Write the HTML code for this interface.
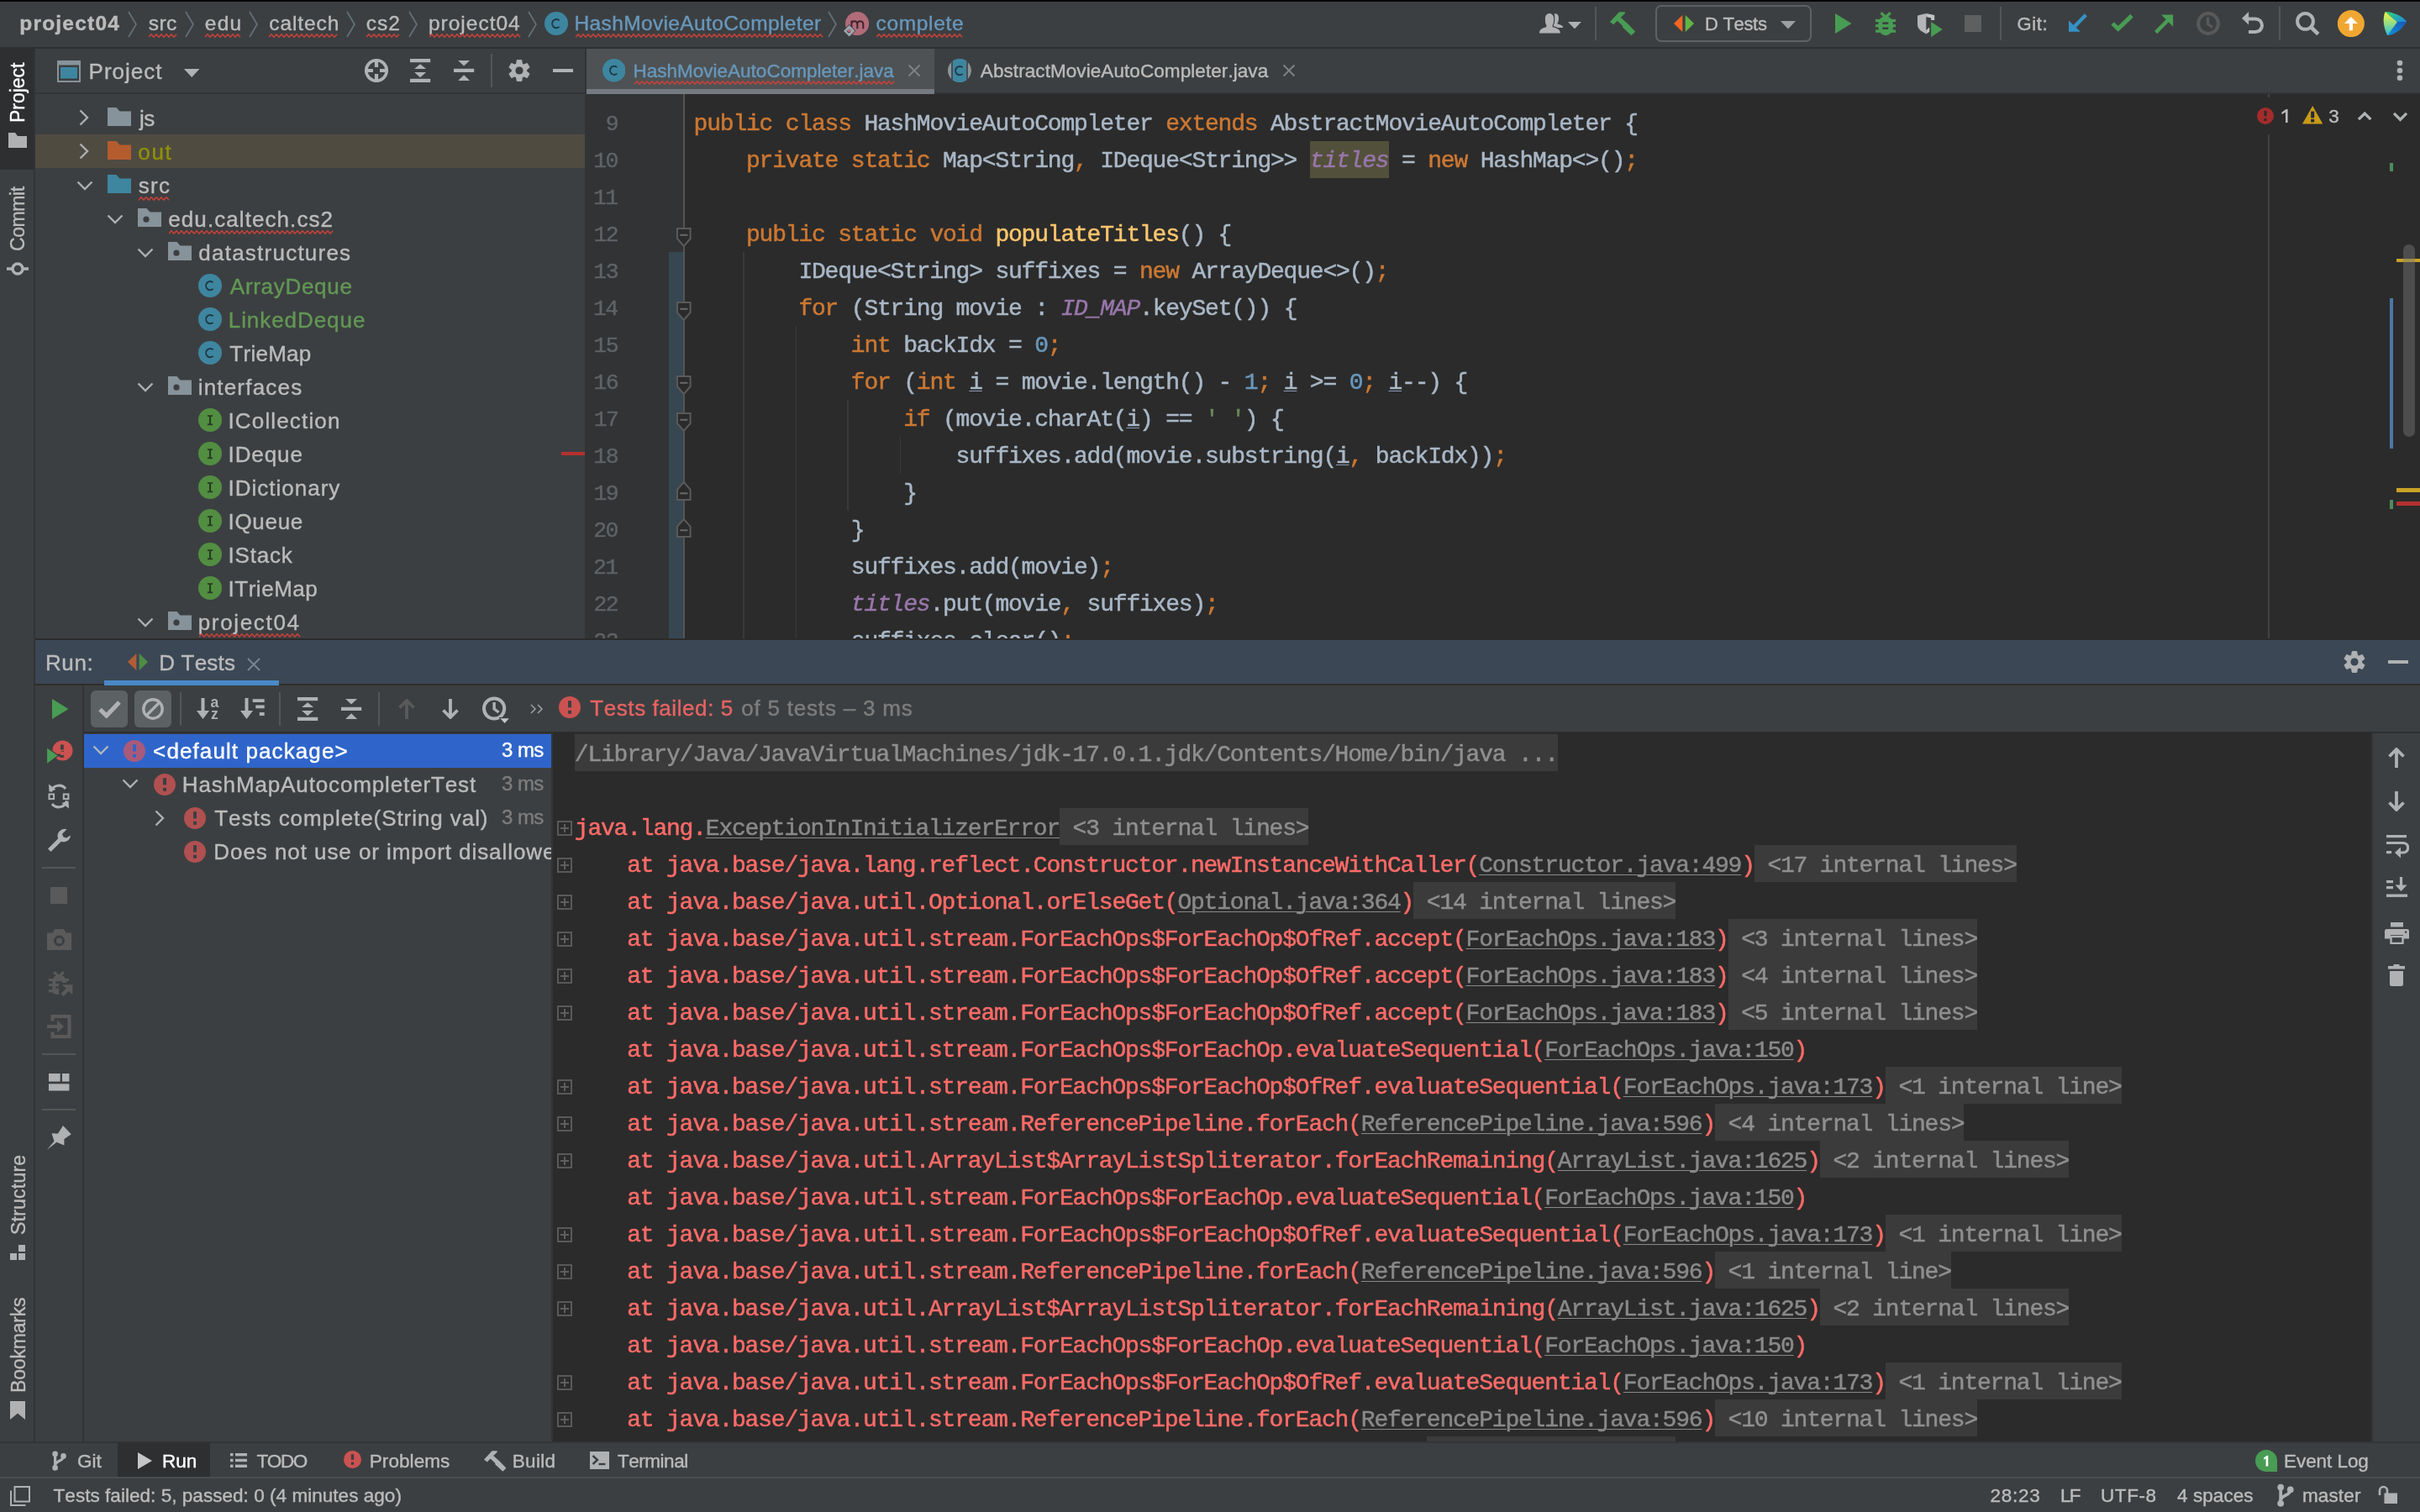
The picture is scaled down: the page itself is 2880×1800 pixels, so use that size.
<!DOCTYPE html>
<html><head><meta charset="utf-8"><title>project04 - HashMovieAutoCompleter.java</title>
<style>
html,body{margin:0;padding:0;background:#3c3f41;}
#app{will-change:transform;position:relative;width:2880px;height:1800px;overflow:hidden;background:#3c3f41;font-family:"Liberation Sans",sans-serif;font-kerning:none;}
.r{position:absolute;display:block;}
.t{position:absolute;white-space:pre;line-height:1;-webkit-text-stroke:0.4px currentColor;}
.c{position:absolute;overflow:hidden;}
.code{position:absolute;white-space:pre;font-family:"Liberation Mono",monospace;line-height:44px;height:44px;-webkit-text-stroke:0.5px currentColor;}
</style></head>
<body>
<div id="app">
<div class="r" style="left:0px;top:0px;width:2880px;height:1.5px;background:#050505;"></div>
<div class="r" style="left:0px;top:56px;width:2880px;height:2px;background:#2d2f30;"></div>
<span class="t " style="left:23.29px;top:15.60px;font-size:24.5px;color:#bbbbbb;letter-spacing:1.202px;font-weight:700;">project04</span>
<span class="t " style="left:176.82px;top:15.60px;font-size:24.5px;color:#bbbbbb;letter-spacing:0.435px;">src</span>
<svg class="r" style="left:176.6px;top:39.7px" width="37" height="5" viewBox="0 0 37 5"><polyline points="0.0,4.2 3.0,0.7 6.0,4.2 9.0,0.7 12.0,4.2 15.0,0.7 18.0,4.2 21.0,0.7 24.0,4.2 27.0,0.7 30.0,4.2 33.0,0.7" fill="none" stroke="#c9403a" stroke-width="1.5"/></svg>
<span class="t " style="left:243.86px;top:15.60px;font-size:24.5px;color:#bbbbbb;letter-spacing:1.145px;">edu</span>
<svg class="r" style="left:244px;top:39.7px" width="46" height="5" viewBox="0 0 46 5"><polyline points="0.0,4.2 3.0,0.7 6.0,4.2 9.0,0.7 12.0,4.2 15.0,0.7 18.0,4.2 21.0,0.7 24.0,4.2 27.0,0.7 30.0,4.2 33.0,0.7 36.0,4.2 39.0,0.7 42.0,4.2" fill="none" stroke="#c9403a" stroke-width="1.5"/></svg>
<span class="t " style="left:320.26px;top:15.60px;font-size:24.5px;color:#bbbbbb;letter-spacing:0.901px;">caltech</span>
<svg class="r" style="left:320.4px;top:39.7px" width="86" height="5" viewBox="0 0 86 5"><polyline points="0.0,4.2 3.0,0.7 6.0,4.2 9.0,0.7 12.0,4.2 15.0,0.7 18.0,4.2 21.0,0.7 24.0,4.2 27.0,0.7 30.0,4.2 33.0,0.7 36.0,4.2 39.0,0.7 42.0,4.2 45.0,0.7 48.0,4.2 51.0,0.7 54.0,4.2 57.0,0.7 60.0,4.2 63.0,0.7 66.0,4.2 69.0,0.7 72.0,4.2 75.0,0.7 78.0,4.2 81.0,0.7" fill="none" stroke="#c9403a" stroke-width="1.5"/></svg>
<span class="t " style="left:435.86px;top:15.60px;font-size:24.5px;color:#bbbbbb;letter-spacing:0.974px;">cs2</span>
<svg class="r" style="left:436px;top:39.7px" width="43" height="5" viewBox="0 0 43 5"><polyline points="0.0,4.2 3.0,0.7 6.0,4.2 9.0,0.7 12.0,4.2 15.0,0.7 18.0,4.2 21.0,0.7 24.0,4.2 27.0,0.7 30.0,4.2 33.0,0.7 36.0,4.2 39.0,0.7" fill="none" stroke="#c9403a" stroke-width="1.5"/></svg>
<span class="t " style="left:509.92px;top:15.60px;font-size:24.5px;color:#bbbbbb;letter-spacing:1.001px;">project04</span>
<svg class="r" style="left:510.6px;top:39.7px" width="112" height="5" viewBox="0 0 112 5"><polyline points="0.0,4.2 3.0,0.7 6.0,4.2 9.0,0.7 12.0,4.2 15.0,0.7 18.0,4.2 21.0,0.7 24.0,4.2 27.0,0.7 30.0,4.2 33.0,0.7 36.0,4.2 39.0,0.7 42.0,4.2 45.0,0.7 48.0,4.2 51.0,0.7 54.0,4.2 57.0,0.7 60.0,4.2 63.0,0.7 66.0,4.2 69.0,0.7 72.0,4.2 75.0,0.7 78.0,4.2 81.0,0.7 84.0,4.2 87.0,0.7 90.0,4.2 93.0,0.7 96.0,4.2 99.0,0.7 102.0,4.2 105.0,0.7 108.0,4.2" fill="none" stroke="#c9403a" stroke-width="1.5"/></svg>
<span class="t " style="left:683.49px;top:15.60px;font-size:24.5px;color:#6897bb;letter-spacing:0.365px;">HashMovieAutoCompleter</span>
<svg class="r" style="left:684.6px;top:39.7px" width="296" height="5" viewBox="0 0 296 5"><polyline points="0.0,4.2 3.0,0.7 6.0,4.2 9.0,0.7 12.0,4.2 15.0,0.7 18.0,4.2 21.0,0.7 24.0,4.2 27.0,0.7 30.0,4.2 33.0,0.7 36.0,4.2 39.0,0.7 42.0,4.2 45.0,0.7 48.0,4.2 51.0,0.7 54.0,4.2 57.0,0.7 60.0,4.2 63.0,0.7 66.0,4.2 69.0,0.7 72.0,4.2 75.0,0.7 78.0,4.2 81.0,0.7 84.0,4.2 87.0,0.7 90.0,4.2 93.0,0.7 96.0,4.2 99.0,0.7 102.0,4.2 105.0,0.7 108.0,4.2 111.0,0.7 114.0,4.2 117.0,0.7 120.0,4.2 123.0,0.7 126.0,4.2 129.0,0.7 132.0,4.2 135.0,0.7 138.0,4.2 141.0,0.7 144.0,4.2 147.0,0.7 150.0,4.2 153.0,0.7 156.0,4.2 159.0,0.7 162.0,4.2 165.0,0.7 168.0,4.2 171.0,0.7 174.0,4.2 177.0,0.7 180.0,4.2 183.0,0.7 186.0,4.2 189.0,0.7 192.0,4.2 195.0,0.7 198.0,4.2 201.0,0.7 204.0,4.2 207.0,0.7 210.0,4.2 213.0,0.7 216.0,4.2 219.0,0.7 222.0,4.2 225.0,0.7 228.0,4.2 231.0,0.7 234.0,4.2 237.0,0.7 240.0,4.2 243.0,0.7 246.0,4.2 249.0,0.7 252.0,4.2 255.0,0.7 258.0,4.2 261.0,0.7 264.0,4.2 267.0,0.7 270.0,4.2 273.0,0.7 276.0,4.2 279.0,0.7 282.0,4.2 285.0,0.7 288.0,4.2 291.0,0.7 294.0,4.2" fill="none" stroke="#c9403a" stroke-width="1.5"/></svg>
<span class="t " style="left:1042.46px;top:15.60px;font-size:24.5px;color:#6897bb;letter-spacing:0.674px;">complete</span>
<svg class="r" style="left:1042.6px;top:39.7px" width="107" height="5" viewBox="0 0 107 5"><polyline points="0.0,4.2 3.0,0.7 6.0,4.2 9.0,0.7 12.0,4.2 15.0,0.7 18.0,4.2 21.0,0.7 24.0,4.2 27.0,0.7 30.0,4.2 33.0,0.7 36.0,4.2 39.0,0.7 42.0,4.2 45.0,0.7 48.0,4.2 51.0,0.7 54.0,4.2 57.0,0.7 60.0,4.2 63.0,0.7 66.0,4.2 69.0,0.7 72.0,4.2 75.0,0.7 78.0,4.2 81.0,0.7 84.0,4.2 87.0,0.7 90.0,4.2 93.0,0.7 96.0,4.2 99.0,0.7 102.0,4.2" fill="none" stroke="#c9403a" stroke-width="1.5"/></svg>
<svg class="r" style="left:152px;top:13px;" width="12" height="32" viewBox="0 0 12 32"><polyline points="1,1 10,16 1,31" fill="none" stroke="#647178" stroke-width="1.700"/></svg>
<svg class="r" style="left:220px;top:13px;" width="12" height="32" viewBox="0 0 12 32"><polyline points="1,1 10,16 1,31" fill="none" stroke="#647178" stroke-width="1.700"/></svg>
<svg class="r" style="left:296px;top:13px;" width="12" height="32" viewBox="0 0 12 32"><polyline points="1,1 10,16 1,31" fill="none" stroke="#647178" stroke-width="1.700"/></svg>
<svg class="r" style="left:412px;top:13px;" width="12" height="32" viewBox="0 0 12 32"><polyline points="1,1 10,16 1,31" fill="none" stroke="#647178" stroke-width="1.700"/></svg>
<svg class="r" style="left:486px;top:13px;" width="12" height="32" viewBox="0 0 12 32"><polyline points="1,1 10,16 1,31" fill="none" stroke="#647178" stroke-width="1.700"/></svg>
<svg class="r" style="left:628px;top:13px;" width="12" height="32" viewBox="0 0 12 32"><polyline points="1,1 10,16 1,31" fill="none" stroke="#647178" stroke-width="1.700"/></svg>
<svg class="r" style="left:985px;top:13px;" width="12" height="32" viewBox="0 0 12 32"><polyline points="1,1 10,16 1,31" fill="none" stroke="#647178" stroke-width="1.700"/></svg>
<svg class="r" style="left:648px;top:14px;" width="28" height="28" viewBox="0 0 28 28"><circle cx="14" cy="14" r="14" fill="#3e86a0"/><path d="M17.600 10.300A5 5.200 0 1 0 17.600 17.900" fill="none" stroke="#1e3a47" stroke-width="2"/></svg>
<svg class="r" style="left:1005.9px;top:13.8px;" width="28.2" height="28.2" viewBox="0 0 28.200 28.200"><circle cx="14.100" cy="14.100" r="14.100" fill="#b16c7a"/><path d="M7.400 20.200V10.500M7.400 15c0-2.600 1.300-3.700 3.300-3.700c2.200 0 3.650 1.200 3.650 3.700v5.200M14.350 15c0-2.600 1.300-3.700 3.300-3.700c2.200 0 3.650 1.200 3.650 3.700v5.200" fill="none" stroke="#41232d" stroke-width="2"/></svg>
<svg class="r" style="left:1003.3px;top:29.4px;" width="15.4" height="15.4" viewBox="0 0 15.4 15.4"><path d="M7.700 0L15.400 7.700L7.700 15.400L0 7.700z" fill="#3c3f41"/><path d="M7.700 1L14.400 7.700L7.700 14.400L1 7.700z" fill="#9aa7b0"/><circle cx="7.300" cy="8.200" r="2" fill="#3a3033"/><circle cx="7.900" cy="7.500" r="1.900" fill="#c0687a"/></svg>
<svg class="r" style="left:1831.9px;top:15.8px;" width="29" height="24" viewBox="0 0 29 24"><path d="M17.800 0.300C20.600 -0.400 23 1.600 23 5C23 8 22.500 10 21.500 11.200L21.700 12.600C25.500 13.600 28.300 14.600 28.300 17.100H22C20.500 16.300 19 15.800 17 15.200L16.700 14C18 12.500 18.300 9.500 18.300 6C18.300 3.500 18 1.500 17.800 0.300z" fill="#afb1b3"/><path d="M0 23.400C0 19 3 17.500 8.200 16.200L8.500 14.200C7.100 12.500 6.900 10 6.900 6C6.900 2.500 9 0 12 0C15 0 17.100 2.500 17.100 6C17.100 10 16.900 12.500 15.500 14.200L15.800 16.200C21 17.500 24.900 19 24.900 23.400z" fill="#afb1b3" stroke="#3c3f41" stroke-width="1.200" paint-order="stroke"/></svg>
<svg class="r" style="left:1866px;top:25.8px;" width="15.9" height="8.4" viewBox="0 0 15.9 8.4"><path d="M0 0H15.9L7.95 8.4z" fill="#afb1b3"/></svg>
<div class="r" style="left:1898.1px;top:8px;width:2px;height:40px;background:#555555;"></div>
<svg class="r" style="left:1916px;top:13.8px;" width="30.2" height="28.5" viewBox="0 0 30.200 28.500"><path d="M0 11.900L11 0.300H17.900V2L12.700 6.700L19.100 12.400L20.200 13.300L30.100 23.700L25.500 28.300L15.300 18.800L15 16.800L8.700 10.700L4.300 15.300z" fill="#499c54"/></svg>
<div class="r" style="left:1970px;top:6px;width:186px;height:43.5px;box-sizing:border-box;border:2px solid #5f6163;border-radius:7px"></div>
<svg class="r" style="left:1992px;top:18px;" width="24" height="20" viewBox="0 0 24 20"><path d="M10.3 0V20L0 10z" fill="#f26522"/><path d="M13.7 0V20L24 10z" fill="#62b543"/></svg>
<span class="t " style="left:2029.10px;top:18.00px;font-size:22px;color:#bbbbbb;letter-spacing:-0.331px;">D Tests</span>
<svg class="r" style="left:2119px;top:24.5px;" width="18" height="9.5" viewBox="0 0 18 9.5"><path d="M0 0H18L9.0 9.5z" fill="#9da0a3"/></svg>
<svg class="r" style="left:2184px;top:16px;" width="19.6" height="24" viewBox="0 0 19.6 24"><path d="M0 0L19.6 12.0L0 24z" fill="#499c54"/></svg>
<svg class="r" style="left:2232px;top:13.85px;" width="24.2" height="28.2" viewBox="0 0 24.200 28.200"><ellipse cx="12.100" cy="16.500" rx="9.100" ry="11.600" fill="#499c54"/><path d="M6.400 1.200L12.100 6.200L17.800 1.200" stroke="#499c54" stroke-width="3.200" fill="none"/><rect x="0" y="8.900" width="24.200" height="3.200" fill="#499c54"/><rect x="0" y="15.100" width="24.200" height="3.200" fill="#499c54"/><rect x="0" y="21.500" width="24.200" height="3.300" fill="#499c54"/><rect x="8.300" y="12.400" width="7" height="2.500" fill="#3c3f41"/><rect x="8.300" y="18.500" width="7" height="2.500" fill="#3c3f41"/></svg>
<svg class="r" style="left:2281.8px;top:15.9px;" width="30" height="28.5" viewBox="0 0 30 28.5"><path d="M0 2.500L10.300 0V24.400C5 21.500 0 19 0 13z" fill="#b4b5b7"/><path d="M10.300 0L20.200 2.100V8.100H16.100V5.400L10.300 4.100z" fill="#c2c3c5"/><path d="M10.300 24.400L14.200 21.800V16.600L10.300 19.900z" fill="#c2c3c5"/><path d="M16.100 10.100L29.800 19L16.100 28.100z" fill="#499c54"/></svg>
<div class="r" style="left:2338px;top:18px;width:20px;height:20px;background:#5e6060;"></div>
<div class="r" style="left:2380.3px;top:8px;width:2px;height:40px;background:#555555;"></div>
<span class="t " style="left:2400.49px;top:18.00px;font-size:22px;color:#bbbbbb;letter-spacing:0.597px;">Git:</span>
<svg class="r" style="left:2461px;top:16px;" width="24" height="23" viewBox="0 0 24 23"><path d="M21.300 1.800L6 17.500" stroke="#3592c4" stroke-width="4.400" fill="none"/><path d="M1 8.500V21.800H14.800z" fill="#3592c4"/></svg>
<svg class="r" style="left:2512px;top:16px;" width="28" height="23" viewBox="0 0 28 23"><path d="M2.100 12L8.800 18.300L25 2.600" fill="none" stroke="#499c54" stroke-width="5"/></svg>
<svg class="r" style="left:2564px;top:17px;" width="23" height="24" viewBox="0 0 23 24"><path d="M1.600 21.600L17 6" stroke="#499c54" stroke-width="4.400" fill="none"/><path d="M8 0.600H22.100V14.700z" fill="#499c54"/></svg>
<svg class="r" style="left:2613.5px;top:14px;" width="28" height="28" viewBox="0 0 28 28"><circle cx="14" cy="14" r="11.900" fill="none" stroke="#595959" stroke-width="4"/><path d="M13.500 6.500V14.500L19 18.500" fill="none" stroke="#595959" stroke-width="3.400"/></svg>
<svg class="r" style="left:2668px;top:14.1px;" width="27" height="27" viewBox="0 0 27 27"><path d="M7.500 8.400H16.200A7.800 7.800 0 0 1 16.200 24H8.100" fill="none" stroke="#afb1b3" stroke-width="4"/><path d="M0 7.800L8.100 0V15.600z" fill="#afb1b3"/></svg>
<div class="r" style="left:2711.8px;top:8px;width:2px;height:40px;background:#555555;"></div>
<svg class="r" style="left:2732px;top:14px;" width="29" height="29" viewBox="0 0 29 29"><circle cx="11.500" cy="11.400" r="9.400" fill="none" stroke="#afb1b3" stroke-width="4"/><path d="M18 18L26.800 26.600" stroke="#afb1b3" stroke-width="4.600"/></svg>
<svg class="r" style="left:2782px;top:12px;" width="32" height="32" viewBox="0 0 32 32"><circle cx="15.900" cy="16.100" r="16" fill="#f0a732"/><path d="M15.900 7.900L23.800 15.900H18V24.200H13.800V15.900H8z" fill="#fff"/></svg>
<svg class="r" style="left:2836px;top:13.9px;" width="28.4" height="28.6" viewBox="0 0 28.4 28.6"><defs><linearGradient id="lgA" x1="0" y1="0" x2="0" y2="1"><stop offset="0" stop-color="#f6f63a"/><stop offset=".5" stop-color="#93dc86"/><stop offset="1" stop-color="#21bfe0"/></linearGradient><linearGradient id="lgB" x1="0" y1="0" x2="1" y2="1"><stop offset="0" stop-color="#2fd874"/><stop offset="1" stop-color="#1a86e4"/></linearGradient><linearGradient id="lgC" x1="1" y1="0" x2="0" y2="1"><stop offset="0" stop-color="#1a55b8"/><stop offset="1" stop-color="#0f94dc"/></linearGradient></defs><path d="M2.600 0C13 0.500 23 5 28.100 11.900L16.900 12.200z" fill="url(#lgB)"/><path d="M28.100 11.900C24 20 14.500 27 5.300 28.400L16.900 12.200z" fill="url(#lgC)"/><path d="M2.600 0L16.900 12.200L5.300 28.400C1.500 21 -1.500 10 2.600 0z" fill="url(#lgA)"/></svg>
<div class="r" style="left:0px;top:58px;width:40px;height:1658px;background:#3c3f41;"></div>
<div class="r" style="left:40px;top:58px;width:2px;height:1658px;background:#323436;"></div>
<div class="r" style="left:0px;top:58px;width:40px;height:144px;background:#2d2f31;"></div>
<span class="t" style="left:10.20px;top:146.09px;font-size:23px;color:#ffffff;letter-spacing:-0.021px;transform-origin:0 0;transform:rotate(-90deg);">Project</span>
<svg class="r" style="left:10px;top:158px;" width="22" height="18" viewBox="0 0 22 18"><path d="M0 0h8l3 4h11v14H0z" fill="#afb1b3"/></svg>
<span class="t" style="left:9.80px;top:299.17px;font-size:23px;color:#bbbbbb;letter-spacing:-0.417px;transform-origin:0 0;transform:rotate(-90deg);">Commit</span>
<svg class="r" style="left:8px;top:311px;" width="26" height="18" viewBox="0 0 26 18"><circle cx="13" cy="9" r="6" fill="none" stroke="#afb1b3" stroke-width="3.400"/><path d="M0 9H7M19 9H26" stroke="#afb1b3" stroke-width="3.400"/></svg>
<span class="t" style="left:10.50px;top:1469.74px;font-size:23px;color:#bbbbbb;letter-spacing:0.219px;transform-origin:0 0;transform:rotate(-90deg);">Structure</span>
<svg class="r" style="left:12px;top:1482px;" width="18" height="18" viewBox="0 0 18 18"><rect x="10" y="0" width="8" height="8" fill="#afb1b3"/><rect x="0" y="10" width="8" height="8" fill="#afb1b3"/><rect x="10" y="10" width="8" height="8" fill="#afb1b3"/></svg>
<span class="t" style="left:10.50px;top:1657.79px;font-size:23px;color:#bbbbbb;letter-spacing:-0.177px;transform-origin:0 0;transform:rotate(-90deg);">Bookmarks</span>
<svg class="r" style="left:12px;top:1667.5px;" width="18" height="22" viewBox="0 0 18 22"><path d="M0 0H18V22L9 14.500L0 22z" fill="#afb1b3"/></svg>
<svg class="r" style="left:68px;top:72px;" width="28" height="26" viewBox="0 0 28 26"><rect x="0" y="0" width="28" height="26" fill="#87939a"/><rect x="2" y="5.500" width="24" height="18.500" fill="#3c3f41"/><rect x="4" y="8" width="20" height="13.500" fill="#3e86a0"/></svg>
<span class="t " style="left:105.57px;top:72.00px;font-size:26px;color:#bbbbbb;letter-spacing:1.017px;">Project</span>
<svg class="r" style="left:218.6px;top:82px;" width="18.4" height="10" viewBox="0 0 18.4 10"><path d="M0 0H18.4L9.2 10z" fill="#afb1b3"/></svg>
<svg class="r" style="left:434px;top:70px;" width="28" height="28" viewBox="0 0 28 28"><circle cx="14" cy="14" r="12.200" fill="none" stroke="#afb1b3" stroke-width="3.600"/><path d="M14 0V10M14 18V28M0 14H10M18 14H28" stroke="#afb1b3" stroke-width="4.200"/></svg>
<svg class="r" style="left:488px;top:70px;" width="25" height="28" viewBox="0 0 25 28"><rect x="0" y="0" width="24.2" height="4.2" fill="#afb1b3"/><rect x="0" y="23.8" width="24.2" height="4.2" fill="#afb1b3"/><path d="M12.1 6.2l7 5.9H5.1z" fill="#afb1b3"/><path d="M12.1 22.2l7-6.2H5.1z" fill="#afb1b3"/></svg>
<svg class="r" style="left:540px;top:72px;" width="25" height="24.5" viewBox="0 0 25 24.5"><rect x="0" y="9.8" width="24.2" height="4.2" fill="#afb1b3"/><path d="M12.1 6.6l7-6.6H5.1z" fill="#afb1b3"/><path d="M12.1 17.3l7 6.7H5.1z" fill="#afb1b3"/></svg>
<div class="r" style="left:584px;top:64px;width:2px;height:40px;background:#555555;"></div>
<svg class="r" style="left:605px;top:71px;" width="26" height="26" viewBox="0 0 26 26"><path fill-rule="evenodd" d="M15.77,25.39 L10.23,25.39 L9.61,21.01 L7.75,19.94 L3.65,21.60 L0.88,16.80 L4.37,14.07 L4.37,11.93 L0.88,9.20 L3.65,4.40 L7.75,6.06 L9.61,4.99 L10.23,0.61 L15.77,0.61 L16.39,4.99 L18.25,6.06 L22.35,4.40 L25.12,9.20 L21.63,11.93 L21.63,14.07 L25.12,16.80 L22.35,21.60 L18.25,19.94 L16.39,21.01z M13 7.9a5.1 5.1 0 1 0 0 10.2a5.1 5.1 0 1 0 0-10.2z" fill="#afb1b3" stroke="#afb1b3" stroke-width="1" stroke-linejoin="round"/></svg>
<div class="r" style="left:658px;top:82.3px;width:24px;height:3.4px;background:#afb1b3;"></div>
<div class="r" style="left:42px;top:110px;width:654px;height:2px;background:#323436;"></div>
<div class="c" style="left:42px;top:112px;width:654px;height:648px">
<div class="r" style="left:0px;top:48px;width:654px;height:40px;background:#4f4b41;"></div>
<svg class="r" style="left:86px;top:16px;" width="28" height="22" viewBox="0 0 28 22"><path d="M0 0h10.5l4 4.5H28V22H0z" fill="#87939a"/></svg>
<svg class="r" style="left:52px;top:18px;" width="12" height="20" viewBox="0 0 12 20"><polyline points="1.5,1.5 10,10 1.5,18.5" fill="none" stroke="#adb0b2" stroke-width="2.4"/></svg>
<span class="t " style="left:124.03px;top:15.50px;font-size:26px;color:#bbbbbb;letter-spacing:-0.572px;">js</span>
<svg class="r" style="left:86px;top:56px;" width="28" height="22" viewBox="0 0 28 22"><path d="M0 0h10.5l4 4.5H28V22H0z" fill="#b55c2e"/></svg>
<svg class="r" style="left:52px;top:58px;" width="12" height="20" viewBox="0 0 12 20"><polyline points="1.5,1.5 10,10 1.5,18.5" fill="none" stroke="#adb0b2" stroke-width="2.4"/></svg>
<span class="t " style="left:122.31px;top:55.50px;font-size:26px;color:#8f9107;letter-spacing:1.619px;">out</span>
<svg class="r" style="left:86px;top:96px;" width="28" height="22" viewBox="0 0 28 22"><path d="M0 0h10.5l4 4.5H28V22H0z" fill="#3e86a0"/></svg>
<svg class="r" style="left:49px;top:103px;" width="20" height="12" viewBox="0 0 20 12"><polyline points="1.5,1.5 10,10 18.5,1.5" fill="none" stroke="#adb0b2" stroke-width="2.4"/></svg>
<span class="t " style="left:122.68px;top:95.50px;font-size:26px;color:#bbbbbb;letter-spacing:1.375px;">src</span>
<svg class="r" style="left:122.5px;top:122.0px" width="41" height="5" viewBox="0 0 41 5"><polyline points="0.0,4.2 3.0,0.7 6.0,4.2 9.0,0.7 12.0,4.2 15.0,0.7 18.0,4.2 21.0,0.7 24.0,4.2 27.0,0.7 30.0,4.2 33.0,0.7 36.0,4.2" fill="none" stroke="#c9403a" stroke-width="1.5"/></svg>
<svg class="r" style="left:122px;top:136px;" width="28" height="22" viewBox="0 0 28 22"><path d="M0 0h10.5l4 4.5H28V22H0z" fill="#87939a"/><circle cx="10" cy="13.2" r="3.6" fill="#3c3f41"/></svg>
<svg class="r" style="left:85px;top:143px;" width="20" height="12" viewBox="0 0 20 12"><polyline points="1.5,1.5 10,10 18.5,1.5" fill="none" stroke="#adb0b2" stroke-width="2.4"/></svg>
<span class="t " style="left:158.30px;top:135.50px;font-size:26px;color:#bbbbbb;letter-spacing:1.075px;">edu.caltech.cs2</span>
<svg class="r" style="left:158.5px;top:162.0px" width="198" height="5" viewBox="0 0 198 5"><polyline points="0.0,4.2 3.0,0.7 6.0,4.2 9.0,0.7 12.0,4.2 15.0,0.7 18.0,4.2 21.0,0.7 24.0,4.2 27.0,0.7 30.0,4.2 33.0,0.7 36.0,4.2 39.0,0.7 42.0,4.2 45.0,0.7 48.0,4.2 51.0,0.7 54.0,4.2 57.0,0.7 60.0,4.2 63.0,0.7 66.0,4.2 69.0,0.7 72.0,4.2 75.0,0.7 78.0,4.2 81.0,0.7 84.0,4.2 87.0,0.7 90.0,4.2 93.0,0.7 96.0,4.2 99.0,0.7 102.0,4.2 105.0,0.7 108.0,4.2 111.0,0.7 114.0,4.2 117.0,0.7 120.0,4.2 123.0,0.7 126.0,4.2 129.0,0.7 132.0,4.2 135.0,0.7 138.0,4.2 141.0,0.7 144.0,4.2 147.0,0.7 150.0,4.2 153.0,0.7 156.0,4.2 159.0,0.7 162.0,4.2 165.0,0.7 168.0,4.2 171.0,0.7 174.0,4.2 177.0,0.7 180.0,4.2 183.0,0.7 186.0,4.2 189.0,0.7 192.0,4.2 195.0,0.7" fill="none" stroke="#c9403a" stroke-width="1.5"/></svg>
<svg class="r" style="left:158px;top:176px;" width="28" height="22" viewBox="0 0 28 22"><path d="M0 0h10.5l4 4.5H28V22H0z" fill="#87939a"/><circle cx="10" cy="13.2" r="3.6" fill="#3c3f41"/></svg>
<svg class="r" style="left:121px;top:183px;" width="20" height="12" viewBox="0 0 20 12"><polyline points="1.5,1.5 10,10 18.5,1.5" fill="none" stroke="#adb0b2" stroke-width="2.4"/></svg>
<span class="t " style="left:194.31px;top:175.50px;font-size:26px;color:#bbbbbb;letter-spacing:1.237px;">datastructures</span>
<svg class="r" style="left:194px;top:214px;" width="28" height="28" viewBox="0 0 28 28"><circle cx="14" cy="14" r="14" fill="#3e86a0"/><path d="M17.600 10.300A5 5.200 0 1 0 17.600 17.900" fill="none" stroke="#1e3a47" stroke-width="2"/></svg>
<span class="t " style="left:231.85px;top:215.50px;font-size:26px;color:#629755;letter-spacing:0.697px;">ArrayDeque</span>
<svg class="r" style="left:194px;top:254px;" width="28" height="28" viewBox="0 0 28 28"><circle cx="14" cy="14" r="14" fill="#3e86a0"/><path d="M17.600 10.300A5 5.200 0 1 0 17.600 17.900" fill="none" stroke="#1e3a47" stroke-width="2"/></svg>
<span class="t " style="left:229.77px;top:255.50px;font-size:26px;color:#629755;letter-spacing:0.936px;">LinkedDeque</span>
<svg class="r" style="left:194px;top:294px;" width="28" height="28" viewBox="0 0 28 28"><circle cx="14" cy="14" r="14" fill="#3e86a0"/><path d="M17.600 10.300A5 5.200 0 1 0 17.600 17.900" fill="none" stroke="#1e3a47" stroke-width="2"/></svg>
<span class="t " style="left:231.32px;top:295.50px;font-size:26px;color:#bbbbbb;letter-spacing:0.270px;">TrieMap</span>
<svg class="r" style="left:158px;top:336px;" width="28" height="22" viewBox="0 0 28 22"><path d="M0 0h10.5l4 4.5H28V22H0z" fill="#87939a"/><circle cx="10" cy="13.2" r="3.6" fill="#3c3f41"/></svg>
<svg class="r" style="left:121px;top:343px;" width="20" height="12" viewBox="0 0 20 12"><polyline points="1.5,1.5 10,10 18.5,1.5" fill="none" stroke="#adb0b2" stroke-width="2.4"/></svg>
<span class="t " style="left:193.66px;top:335.50px;font-size:26px;color:#bbbbbb;letter-spacing:1.195px;">interfaces</span>
<svg class="r" style="left:194px;top:374px;" width="28" height="28" viewBox="0 0 28 28"><circle cx="14" cy="14" r="14" fill="#528e42"/><path d="M10.900 8.200h6.200v1.700h-2.050v8.600h2.050v1.700h-6.200v-1.700h2.050v-8.600h-2.050z" fill="#263b20"/></svg>
<span class="t " style="left:229.50px;top:375.50px;font-size:26px;color:#bbbbbb;letter-spacing:1.150px;">ICollection</span>
<svg class="r" style="left:194px;top:414px;" width="28" height="28" viewBox="0 0 28 28"><circle cx="14" cy="14" r="14" fill="#528e42"/><path d="M10.900 8.200h6.200v1.700h-2.050v8.600h2.050v1.700h-6.200v-1.700h2.050v-8.600h-2.050z" fill="#263b20"/></svg>
<span class="t " style="left:229.50px;top:415.50px;font-size:26px;color:#bbbbbb;letter-spacing:0.903px;">IDeque</span>
<svg class="r" style="left:194px;top:454px;" width="28" height="28" viewBox="0 0 28 28"><circle cx="14" cy="14" r="14" fill="#528e42"/><path d="M10.900 8.200h6.200v1.700h-2.050v8.600h2.050v1.700h-6.200v-1.700h2.050v-8.600h-2.050z" fill="#263b20"/></svg>
<span class="t " style="left:229.50px;top:455.50px;font-size:26px;color:#bbbbbb;letter-spacing:1.004px;">IDictionary</span>
<svg class="r" style="left:194px;top:494px;" width="28" height="28" viewBox="0 0 28 28"><circle cx="14" cy="14" r="14" fill="#528e42"/><path d="M10.900 8.200h6.200v1.700h-2.050v8.600h2.050v1.700h-6.200v-1.700h2.050v-8.600h-2.050z" fill="#263b20"/></svg>
<span class="t " style="left:229.50px;top:495.50px;font-size:26px;color:#bbbbbb;letter-spacing:0.694px;">IQueue</span>
<svg class="r" style="left:194px;top:534px;" width="28" height="28" viewBox="0 0 28 28"><circle cx="14" cy="14" r="14" fill="#528e42"/><path d="M10.900 8.200h6.200v1.700h-2.050v8.600h2.050v1.700h-6.200v-1.700h2.050v-8.600h-2.050z" fill="#263b20"/></svg>
<span class="t " style="left:229.50px;top:535.50px;font-size:26px;color:#bbbbbb;letter-spacing:0.782px;">IStack</span>
<svg class="r" style="left:194px;top:574px;" width="28" height="28" viewBox="0 0 28 28"><circle cx="14" cy="14" r="14" fill="#528e42"/><path d="M10.900 8.200h6.200v1.700h-2.050v8.600h2.050v1.700h-6.200v-1.700h2.050v-8.600h-2.050z" fill="#263b20"/></svg>
<span class="t " style="left:229.50px;top:575.50px;font-size:26px;color:#bbbbbb;letter-spacing:0.530px;">ITrieMap</span>
<svg class="r" style="left:158px;top:616px;" width="28" height="22" viewBox="0 0 28 22"><path d="M0 0h10.5l4 4.5H28V22H0z" fill="#87939a"/><circle cx="10" cy="13.2" r="3.6" fill="#3c3f41"/></svg>
<svg class="r" style="left:121px;top:623px;" width="20" height="12" viewBox="0 0 20 12"><polyline points="1.5,1.5 10,10 18.5,1.5" fill="none" stroke="#adb0b2" stroke-width="2.4"/></svg>
<span class="t " style="left:193.72px;top:615.50px;font-size:26px;color:#bbbbbb;letter-spacing:1.660px;">project04</span>
<svg class="r" style="left:194.5px;top:642.0px" width="123" height="5" viewBox="0 0 123 5"><polyline points="0.0,4.2 3.0,0.7 6.0,4.2 9.0,0.7 12.0,4.2 15.0,0.7 18.0,4.2 21.0,0.7 24.0,4.2 27.0,0.7 30.0,4.2 33.0,0.7 36.0,4.2 39.0,0.7 42.0,4.2 45.0,0.7 48.0,4.2 51.0,0.7 54.0,4.2 57.0,0.7 60.0,4.2 63.0,0.7 66.0,4.2 69.0,0.7 72.0,4.2 75.0,0.7 78.0,4.2 81.0,0.7 84.0,4.2 87.0,0.7 90.0,4.2 93.0,0.7 96.0,4.2 99.0,0.7 102.0,4.2 105.0,0.7 108.0,4.2 111.0,0.7 114.0,4.2 117.0,0.7 120.0,4.2" fill="none" stroke="#c9403a" stroke-width="1.5"/></svg>
<div class="r" style="left:626px;top:426.4px;width:28px;height:3.6px;background:#b3312f;"></div>
</div>
<div class="r" style="left:696px;top:58px;width:2px;height:702px;background:#323436;"></div>
<div class="r" style="left:698px;top:58px;width:2182px;height:52px;background:#3c3f41;"></div>
<div class="r" style="left:698px;top:110px;width:2182px;height:2px;background:#323537;"></div>
<div class="r" style="left:698px;top:58px;width:414px;height:54px;background:#4e5254;"></div>
<div class="r" style="left:698px;top:106px;width:414px;height:6px;background:#747a80;"></div>
<svg class="r" style="left:716.5px;top:70px;" width="27.5" height="27.5" viewBox="0 0 28 28"><circle cx="14" cy="14" r="14" fill="#3e86a0"/><path d="M17.600 10.300A5 5.200 0 1 0 17.600 17.900" fill="none" stroke="#1e3a47" stroke-width="2"/></svg>
<span class="t " style="left:753.55px;top:73.60px;font-size:22.5px;color:#6897bb;">HashMovieAutoCompleter.java</span>
<svg class="r" style="left:754.5px;top:95.7px" width="314" height="5" viewBox="0 0 314 5"><polyline points="0.0,4.2 3.0,0.7 6.0,4.2 9.0,0.7 12.0,4.2 15.0,0.7 18.0,4.2 21.0,0.7 24.0,4.2 27.0,0.7 30.0,4.2 33.0,0.7 36.0,4.2 39.0,0.7 42.0,4.2 45.0,0.7 48.0,4.2 51.0,0.7 54.0,4.2 57.0,0.7 60.0,4.2 63.0,0.7 66.0,4.2 69.0,0.7 72.0,4.2 75.0,0.7 78.0,4.2 81.0,0.7 84.0,4.2 87.0,0.7 90.0,4.2 93.0,0.7 96.0,4.2 99.0,0.7 102.0,4.2 105.0,0.7 108.0,4.2 111.0,0.7 114.0,4.2 117.0,0.7 120.0,4.2 123.0,0.7 126.0,4.2 129.0,0.7 132.0,4.2 135.0,0.7 138.0,4.2 141.0,0.7 144.0,4.2 147.0,0.7 150.0,4.2 153.0,0.7 156.0,4.2 159.0,0.7 162.0,4.2 165.0,0.7 168.0,4.2 171.0,0.7 174.0,4.2 177.0,0.7 180.0,4.2 183.0,0.7 186.0,4.2 189.0,0.7 192.0,4.2 195.0,0.7 198.0,4.2 201.0,0.7 204.0,4.2 207.0,0.7 210.0,4.2 213.0,0.7 216.0,4.2 219.0,0.7 222.0,4.2 225.0,0.7 228.0,4.2 231.0,0.7 234.0,4.2 237.0,0.7 240.0,4.2 243.0,0.7 246.0,4.2 249.0,0.7 252.0,4.2 255.0,0.7 258.0,4.2 261.0,0.7 264.0,4.2 267.0,0.7 270.0,4.2 273.0,0.7 276.0,4.2 279.0,0.7 282.0,4.2 285.0,0.7 288.0,4.2 291.0,0.7 294.0,4.2 297.0,0.7 300.0,4.2 303.0,0.7 306.0,4.2 309.0,0.7" fill="none" stroke="#c9403a" stroke-width="1.5"/></svg>
<svg class="r" style="left:1080px;top:76px;" width="16" height="16" viewBox="0 0 16 16"><path d="M1.500 1.500L14.500 14.500M14.500 1.500L1.500 14.500" stroke="#7f8385" stroke-width="1.800"/></svg>
<svg class="r" style="left:1128px;top:70px;" width="28" height="28" viewBox="0 0 28 28"><defs><clipPath id="ac"><circle cx="14" cy="14" r="14"/></clipPath></defs><g clip-path="url(#ac)"><circle cx="14" cy="14" r="14" fill="#8a949b"/><rect x="5.5" y="0" width="17" height="28" fill="#3e86a0"/><path d="M5.5 2.9 A14 14 0 0 0 5.5 25.1 Z" fill="#8a949b"/><path d="M17.600 10.300A5 5.200 0 1 0 17.600 17.900" fill="none" stroke="#1e3a47" stroke-width="2"/><rect x="4.2" y="0" width="1.6" height="28" fill="#3c3f41"/><rect x="22.2" y="0" width="1.6" height="28" fill="#3c3f41"/></g></svg>
<span class="t " style="left:1166.86px;top:73.60px;font-size:22.5px;color:#bbbbbb;letter-spacing:0.073px;">AbstractMovieAutoCompleter.java</span>
<svg class="r" style="left:1526px;top:76px;" width="16" height="16" viewBox="0 0 16 16"><path d="M1.500 1.500L14.500 14.500M14.500 1.500L1.500 14.500" stroke="#7f8385" stroke-width="1.800"/></svg>
<svg class="r" style="left:2852px;top:71px;" width="8" height="26" viewBox="0 0 8 26"><circle cx="4" cy="4" r="3.300" fill="#afb1b3"/><circle cx="4" cy="13" r="3.300" fill="#afb1b3"/><circle cx="4" cy="21.800" r="3.300" fill="#afb1b3"/></svg>
<div class="c" style="left:698px;top:112px;width:2182px;height:648px;background:#2b2b2b">
<div class="r" style="left:0px;top:0px;width:115.5px;height:648px;background:#313335;"></div>
<div class="r" style="left:98px;top:188px;width:16.8px;height:460px;background:#374752;"></div>
<div class="r" style="left:114.8px;top:0px;width:2.2px;height:648px;background:#555555;"></div>
<div class="r" style="left:2001px;top:0px;width:1.5px;height:648px;background:#424242;"></div>
<div class="r" style="left:1994px;top:4px;width:16px;height:44px;background:#2b2b2b;"></div>
<div class="r" style="left:186.29999999999995px;top:188px;width:1.3px;height:460px;background:#393939;"></div>
<div class="r" style="left:249.20000000000005px;top:276px;width:1.3px;height:372px;background:#393939;"></div>
<div class="r" style="left:310.29999999999995px;top:364px;width:1.3px;height:132px;background:#393939;"></div>
<div class="r" style="left:373.20000000000005px;top:408px;width:1.3px;height:44px;background:#393939;"></div>
<div class="r" style="left:861.2px;top:56px;width:94px;height:44px;background:#52503a;"></div>
<span class="t" style="left:22.83px;top:23.10px;font-family:'Liberation Mono',monospace;font-size:26.5px;letter-spacing:-1.503px;color:#606366">9</span>
<div class="code" style="left:127.6px;top:14px;font-size:28px;letter-spacing:-1.203px;color:#a9b7c6"><span style="color:#cc7832;">public class </span><span style="color:#a9b7c6;">HashMovieAutoCompleter </span><span style="color:#cc7832;">extends </span><span style="color:#a9b7c6;">AbstractMovieAutoCompleter {</span></div>
<span class="t" style="left:8.23px;top:67.10px;font-family:'Liberation Mono',monospace;font-size:26.5px;letter-spacing:-1.503px;color:#606366">10</span>
<div class="code" style="left:127.6px;top:58px;font-size:28px;letter-spacing:-1.203px;color:#a9b7c6"><span style="color:#cc7832;">    private static </span><span style="color:#a9b7c6;">Map&lt;String</span><span style="color:#cc7832;">, </span><span style="color:#a9b7c6;">IDeque&lt;String&gt;&gt; </span><span style="color:#9876aa;font-style:italic;">titles</span><span style="color:#a9b7c6;"> = </span><span style="color:#cc7832;">new </span><span style="color:#a9b7c6;">HashMap&lt;&gt;()</span><span style="color:#cc7832;">;</span></div>
<span class="t" style="left:7.88px;top:111.10px;font-family:'Liberation Mono',monospace;font-size:26.5px;letter-spacing:-1.503px;color:#606366">11</span>
<span class="t" style="left:8.47px;top:155.10px;font-family:'Liberation Mono',monospace;font-size:26.5px;letter-spacing:-1.503px;color:#606366">12</span>
<div class="code" style="left:127.6px;top:146px;font-size:28px;letter-spacing:-1.203px;color:#a9b7c6"><span style="color:#cc7832;">    public static void </span><span style="color:#ffc66d;">populateTitles</span><span style="color:#a9b7c6;">() {</span></div>
<span class="t" style="left:8.28px;top:199.10px;font-family:'Liberation Mono',monospace;font-size:26.5px;letter-spacing:-1.503px;color:#606366">13</span>
<div class="code" style="left:127.6px;top:190px;font-size:28px;letter-spacing:-1.203px;color:#a9b7c6"><span style="color:#a9b7c6;">        IDeque&lt;String&gt; suffixes = </span><span style="color:#cc7832;">new </span><span style="color:#a9b7c6;">ArrayDeque&lt;&gt;()</span><span style="color:#cc7832;">;</span></div>
<span class="t" style="left:7.94px;top:243.10px;font-family:'Liberation Mono',monospace;font-size:26.5px;letter-spacing:-1.503px;color:#606366">14</span>
<div class="code" style="left:127.6px;top:234px;font-size:28px;letter-spacing:-1.203px;color:#a9b7c6"><span style="color:#a9b7c6;">        </span><span style="color:#cc7832;">for </span><span style="color:#a9b7c6;">(String movie : </span><span style="color:#9876aa;font-style:italic;">ID_MAP</span><span style="color:#a9b7c6;">.keySet()) {</span></div>
<span class="t" style="left:8.28px;top:287.10px;font-family:'Liberation Mono',monospace;font-size:26.5px;letter-spacing:-1.503px;color:#606366">15</span>
<div class="code" style="left:127.6px;top:278px;font-size:28px;letter-spacing:-1.203px;color:#a9b7c6"><span style="color:#a9b7c6;">            </span><span style="color:#cc7832;">int </span><span style="color:#a9b7c6;">backIdx = </span><span style="color:#6897bb;">0</span><span style="color:#cc7832;">;</span></div>
<span class="t" style="left:8.32px;top:331.10px;font-family:'Liberation Mono',monospace;font-size:26.5px;letter-spacing:-1.503px;color:#606366">16</span>
<div class="code" style="left:127.6px;top:322px;font-size:28px;letter-spacing:-1.203px;color:#a9b7c6"><span style="color:#a9b7c6;">            </span><span style="color:#cc7832;">for </span><span style="color:#a9b7c6;">(</span><span style="color:#cc7832;">int </span><span style="color:#a9b7c6;text-decoration:underline #8a97b5;text-decoration-thickness:1.400px;text-underline-offset:1.500px;">i</span><span style="color:#a9b7c6;"> = movie.length() - </span><span style="color:#6897bb;">1</span><span style="color:#cc7832;">; </span><span style="color:#a9b7c6;text-decoration:underline #8a97b5;text-decoration-thickness:1.400px;text-underline-offset:1.500px;">i</span><span style="color:#a9b7c6;"> &gt;= </span><span style="color:#6897bb;">0</span><span style="color:#cc7832;">; </span><span style="color:#a9b7c6;text-decoration:underline #8a97b5;text-decoration-thickness:1.400px;text-underline-offset:1.500px;">i</span><span style="color:#a9b7c6;">--) {</span></div>
<span class="t" style="left:8.67px;top:375.10px;font-family:'Liberation Mono',monospace;font-size:26.5px;letter-spacing:-1.503px;color:#606366">17</span>
<div class="code" style="left:127.6px;top:366px;font-size:28px;letter-spacing:-1.203px;color:#a9b7c6"><span style="color:#a9b7c6;">                </span><span style="color:#cc7832;">if </span><span style="color:#a9b7c6;">(movie.charAt(</span><span style="color:#a9b7c6;text-decoration:underline #8a97b5;text-decoration-thickness:1.400px;text-underline-offset:1.500px;">i</span><span style="color:#a9b7c6;">) == </span><span style="color:#6a8759;">' '</span><span style="color:#a9b7c6;">) {</span></div>
<span class="t" style="left:8.34px;top:419.10px;font-family:'Liberation Mono',monospace;font-size:26.5px;letter-spacing:-1.503px;color:#606366">18</span>
<div class="code" style="left:127.6px;top:410px;font-size:28px;letter-spacing:-1.203px;color:#a9b7c6"><span style="color:#a9b7c6;">                    suffixes.add(movie.substring(</span><span style="color:#a9b7c6;text-decoration:underline #8a97b5;text-decoration-thickness:1.400px;text-underline-offset:1.500px;">i</span><span style="color:#cc7832;">, </span><span style="color:#a9b7c6;">backIdx))</span><span style="color:#cc7832;">;</span></div>
<span class="t" style="left:8.43px;top:463.10px;font-family:'Liberation Mono',monospace;font-size:26.5px;letter-spacing:-1.503px;color:#606366">19</span>
<div class="code" style="left:127.6px;top:454px;font-size:28px;letter-spacing:-1.203px;color:#a9b7c6"><span style="color:#a9b7c6;">                }</span></div>
<span class="t" style="left:8.23px;top:507.10px;font-family:'Liberation Mono',monospace;font-size:26.5px;letter-spacing:-1.503px;color:#606366">20</span>
<div class="code" style="left:127.6px;top:498px;font-size:28px;letter-spacing:-1.203px;color:#a9b7c6"><span style="color:#a9b7c6;">            }</span></div>
<span class="t" style="left:7.88px;top:551.10px;font-family:'Liberation Mono',monospace;font-size:26.5px;letter-spacing:-1.503px;color:#606366">21</span>
<div class="code" style="left:127.6px;top:542px;font-size:28px;letter-spacing:-1.203px;color:#a9b7c6"><span style="color:#a9b7c6;">            suffixes.add(movie)</span><span style="color:#cc7832;">;</span></div>
<span class="t" style="left:8.47px;top:595.10px;font-family:'Liberation Mono',monospace;font-size:26.5px;letter-spacing:-1.503px;color:#606366">22</span>
<div class="code" style="left:127.6px;top:586px;font-size:28px;letter-spacing:-1.203px;color:#a9b7c6"><span style="color:#a9b7c6;">            </span><span style="color:#9876aa;font-style:italic;">titles</span><span style="color:#a9b7c6;">.put(movie</span><span style="color:#cc7832;">, </span><span style="color:#a9b7c6;">suffixes)</span><span style="color:#cc7832;">;</span></div>
<span class="t" style="left:8.28px;top:639.10px;font-family:'Liberation Mono',monospace;font-size:26.5px;letter-spacing:-1.503px;color:#606366">23</span>
<div class="code" style="left:127.6px;top:630px;font-size:28px;letter-spacing:-1.203px;color:#a9b7c6"><span style="color:#a9b7c6;">            suffixes.clear()</span><span style="color:#cc7832;">;</span></div>
<svg class="r" style="left:107.10000000000002px;top:158.8px;" width="18" height="24" viewBox="0 0 18 24"><path d="M1 1H16.600V13L8.800 21.900L1 13z" fill="#2b2b2b" stroke="#5a5a5a" stroke-width="2"/><path d="M4.200 8.800H13.400" stroke="#6a6a6a" stroke-width="2"/></svg>
<svg class="r" style="left:107.10000000000002px;top:246.8px;" width="18" height="24" viewBox="0 0 18 24"><path d="M1 1H16.600V13L8.800 21.900L1 13z" fill="#2b2b2b" stroke="#5a5a5a" stroke-width="2"/><path d="M4.200 8.800H13.400" stroke="#6a6a6a" stroke-width="2"/></svg>
<svg class="r" style="left:107.10000000000002px;top:334.8px;" width="18" height="24" viewBox="0 0 18 24"><path d="M1 1H16.600V13L8.800 21.900L1 13z" fill="#2b2b2b" stroke="#5a5a5a" stroke-width="2"/><path d="M4.200 8.800H13.400" stroke="#6a6a6a" stroke-width="2"/></svg>
<svg class="r" style="left:107.10000000000002px;top:378.8px;" width="18" height="24" viewBox="0 0 18 24"><path d="M1 1H16.600V13L8.800 21.900L1 13z" fill="#2b2b2b" stroke="#5a5a5a" stroke-width="2"/><path d="M4.200 8.800H13.400" stroke="#6a6a6a" stroke-width="2"/></svg>
<svg class="r" style="left:107.10000000000002px;top:461.20000000000005px;" width="18" height="24" viewBox="0 0 18 24"><path d="M1 21.900H16.600V9.900L8.800 1L1 9.900z" fill="#2b2b2b" stroke="#5a5a5a" stroke-width="2"/><path d="M4.200 14.300H13.400" stroke="#6a6a6a" stroke-width="2"/></svg>
<svg class="r" style="left:107.10000000000002px;top:505.20000000000005px;" width="18" height="24" viewBox="0 0 18 24"><path d="M1 21.900H16.600V9.900L8.800 1L1 9.900z" fill="#2b2b2b" stroke="#5a5a5a" stroke-width="2"/><path d="M4.200 14.300H13.400" stroke="#6a6a6a" stroke-width="2"/></svg>
<svg class="r" style="left:1988px;top:16px;" width="20" height="20" viewBox="0 0 26 26"><circle cx="13" cy="13" r="13" fill="#a32c2b"/><rect x="11" y="5.2" width="4" height="8.2" fill="#2b2b2b"/><rect x="11" y="16.8" width="4" height="4" fill="#2b2b2b"/></svg>
<svg class="r" style="left:2016.6999999999998px;top:17.80000000000001px;" width="8" height="16.2" viewBox="0 0 8 16.2"><path d="M7.600 0V16.200H5V3.600L0.400 6.300V3.700L5.600 0z" fill="#bbbbbb"/></svg>
<svg class="r" style="left:2041.9px;top:14.299999999999997px;" width="24.4" height="21.6" viewBox="0 0 24.4 21.6"><path d="M12.200 0L24.400 21.600H0z" fill="#c89b17"/><rect x="10.200" y="6.600" width="4" height="7.800" fill="#23273a"/><rect x="10.200" y="15.900" width="4" height="3.500" fill="#23273a"/></svg>
<span class="t " style="left:2073.24px;top:15.90px;font-size:22.5px;color:#bbbbbb;">3</span>
<svg class="r" style="left:2107px;top:20px;" width="19" height="12" viewBox="0 0 19 12"><polyline points="2,10.200 9.200,3 16.400,10.200" fill="none" stroke="#afb1b3" stroke-width="3.300"/></svg>
<svg class="r" style="left:2148.5px;top:21px;" width="19" height="12" viewBox="0 0 19 12"><polyline points="2,1.800 9.500,9.300 17,1.800" fill="none" stroke="#afb1b3" stroke-width="3.300"/></svg>
<div class="r" style="left:2146px;top:81.5px;width:4px;height:10.5px;background:#4f8a5b;"></div>
<div class="r" style="left:2154px;top:195.5px;width:28px;height:4.5px;background:#c9a227;"></div>
<div class="r" style="left:2146px;top:243px;width:4px;height:179px;background:#4a78a6;"></div>
<div class="r" style="left:2154px;top:469px;width:28px;height:4.5px;background:#c9a227;"></div>
<div class="r" style="left:2154px;top:485px;width:28px;height:4.5px;background:#b3312f;"></div>
<div class="r" style="left:2146px;top:483px;width:4px;height:10.5px;background:#4f8a5b;"></div>
<div class="r" style="left:2162px;top:179px;width:14px;height:229px;background:rgba(120,120,120,0.45);border-radius:7px;"></div>
</div>
<div class="r" style="left:42px;top:760px;width:2838px;height:2px;background:#2b2b2b;"></div>
<div class="r" style="left:42px;top:762px;width:2838px;height:52px;background:#3b4754;"></div>
<div class="r" style="left:42px;top:814px;width:2838px;height:2px;background:#2d2d2d;"></div>
<div class="r" style="left:124px;top:810px;width:208px;height:6px;background:#4a88c7;"></div>
<span class="t " style="left:53.97px;top:776.00px;font-size:26px;color:#bbbbbb;letter-spacing:0.629px;">Run:</span>
<svg class="r" style="left:152px;top:778px;" width="24" height="20" viewBox="0 0 24 20"><path d="M10.3 0V20L0 10z" fill="#b35c35"/><path d="M13.7 0V20L24 10z" fill="#4f8c45"/></svg>
<span class="t " style="left:189.17px;top:776.00px;font-size:26px;color:#bbbbbb;letter-spacing:0.218px;">D Tests</span>
<svg class="r" style="left:294px;top:782.5px;" width="16" height="16" viewBox="0 0 16 16"><path d="M1 1L15 15M15 1L1 15" stroke="#7a8591" stroke-width="1.800"/></svg>
<svg class="r" style="left:2789px;top:775px;" width="26" height="26" viewBox="0 0 26 26"><path fill-rule="evenodd" d="M15.77,25.39 L10.23,25.39 L9.61,21.01 L7.75,19.94 L3.65,21.60 L0.88,16.80 L4.37,14.07 L4.37,11.93 L0.88,9.20 L3.65,4.40 L7.75,6.06 L9.61,4.99 L10.23,0.61 L15.77,0.61 L16.39,4.99 L18.25,6.06 L22.35,4.40 L25.12,9.20 L21.63,11.93 L21.63,14.07 L25.12,16.80 L22.35,21.60 L18.25,19.94 L16.39,21.01z M13 7.9a5.1 5.1 0 1 0 0 10.2a5.1 5.1 0 1 0 0-10.2z" fill="#afb1b3" stroke="#afb1b3" stroke-width="1" stroke-linejoin="round"/></svg>
<div class="r" style="left:2842px;top:786.2px;width:24px;height:3.4px;background:#afb1b3;"></div>
<div class="r" style="left:98px;top:816px;width:2px;height:900px;background:#323436;"></div>
<div class="r" style="left:100px;top:870.5px;width:2780px;height:2px;background:#2d2f30;"></div>
<svg class="r" style="left:62px;top:832px;" width="19.5" height="24" viewBox="0 0 19.5 24"><path d="M0 0L19.5 12.0L0 24z" fill="#499c54"/></svg>
<div class="r" style="left:108px;top:822px;width:44px;height:44px;background:#5c6164;border-radius:6px;"></div>
<svg class="r" style="left:117px;top:833px;" width="27" height="22" viewBox="0 0 27 22"><path d="M2 11.500L9.700 19L25 3" fill="none" stroke="#afb1b3" stroke-width="5.200"/></svg>
<div class="r" style="left:160px;top:822px;width:44px;height:44px;background:#5c6164;border-radius:6px;"></div>
<svg class="r" style="left:169px;top:831px;" width="26" height="26" viewBox="0 0 26 26"><circle cx="13" cy="13" r="11.200" fill="none" stroke="#afb1b3" stroke-width="3.400"/><path d="M5.500 20.500L20.500 5.500" stroke="#afb1b3" stroke-width="3.400"/></svg>
<div class="r" style="left:214.3px;top:824px;width:2px;height:40px;background:#555555;"></div>
<svg class="r" style="left:234px;top:831px;" width="27" height="26" viewBox="0 0 27 26"><path d="M7.500 0V19" stroke="#afb1b3" stroke-width="4"/><path d="M0 15H15L7.500 25z" fill="#afb1b3"/><text x="16.500" y="10.500" font-family="Liberation Sans" font-weight="700" font-size="17.500" fill="#afb1b3">a</text><text x="17" y="25" font-family="Liberation Sans" font-weight="700" font-size="17.500" fill="#afb1b3">z</text></svg>
<svg class="r" style="left:285.5px;top:831px;" width="30" height="26" viewBox="0 0 30 26"><path d="M7.500 0V19" stroke="#afb1b3" stroke-width="4"/><path d="M0 15H15L7.500 25z" fill="#afb1b3"/><rect x="14.700" y="1.200" width="14" height="3.800" fill="#afb1b3"/><rect x="18.300" y="8.500" width="10.400" height="3.800" fill="#afb1b3"/><rect x="22.800" y="17" width="5.900" height="4" fill="#afb1b3"/></svg>
<div class="r" style="left:332.3px;top:824px;width:2px;height:40px;background:#555555;"></div>
<svg class="r" style="left:353.5px;top:830px;" width="25" height="28" viewBox="0 0 25 28"><rect x="0" y="0" width="24.2" height="4.2" fill="#afb1b3"/><rect x="0" y="23.8" width="24.2" height="4.2" fill="#afb1b3"/><path d="M12.1 6.2l7 5.9H5.1z" fill="#afb1b3"/><path d="M12.1 22.2l7-6.2H5.1z" fill="#afb1b3"/></svg>
<svg class="r" style="left:405.5px;top:832px;" width="25" height="24.5" viewBox="0 0 25 24.5"><rect x="0" y="9.8" width="24.2" height="4.2" fill="#afb1b3"/><path d="M12.1 6.6l7-6.6H5.1z" fill="#afb1b3"/><path d="M12.1 17.3l7 6.7H5.1z" fill="#afb1b3"/></svg>
<div class="r" style="left:450px;top:824px;width:2px;height:40px;background:#555555;"></div>
<svg class="r" style="left:474px;top:832px;" width="20" height="24" viewBox="0 0 20 24"><path d="M10 1.5V24M1.5 10.5L10 2L18.5 10.5" fill="none" stroke="#5a5a5a" stroke-width="3.8"/></svg>
<svg class="r" style="left:526px;top:832px;transform:rotate(180deg);" width="20" height="24" viewBox="0 0 20 24"><path d="M10 1.5V24M1.5 10.5L10 2L18.5 10.5" fill="none" stroke="#afb1b3" stroke-width="3.8"/></svg>
<svg class="r" style="left:574px;top:829px;" width="34" height="34" viewBox="0 0 34 34"><circle cx="14.100" cy="14.500" r="12.100" fill="none" stroke="#afb1b3" stroke-width="4"/><path d="M14.100 7V15L19.500 19" fill="none" stroke="#afb1b3" stroke-width="3.400"/><path d="M19.500 25H34L26.700 33z" fill="#3c3f41"/><path d="M21.400 26.300H31.800L26.600 32z" fill="#c4c6c8"/></svg>
<svg class="r" style="left:631px;top:838px;" width="16" height="12" viewBox="0 0 16 12"><polyline points="1,1 6,6 1,11" fill="none" stroke="#9b9ea0" stroke-width="1.600"/><polyline points="9,1 14,6 9,11" fill="none" stroke="#9b9ea0" stroke-width="1.600"/></svg>
<svg class="r" style="left:665px;top:829px;" width="26" height="26" viewBox="0 0 26 26"><circle cx="13" cy="13" r="13" fill="#cb5250"/><rect x="11" y="5.2" width="4" height="8.2" fill="#3c3f41"/><rect x="11" y="16.8" width="4" height="4" fill="#3c3f41"/></svg>
<span class="t " style="left:702.32px;top:830.00px;font-size:26px;color:#e86363;letter-spacing:0.573px;">Tests failed: 5</span>
<span class="t " style="left:882.31px;top:830.00px;font-size:26px;color:#7d7d7d;letter-spacing:0.787px;">of 5 tests – 3 ms</span>
<div class="c" style="left:100px;top:874px;width:556px;height:842px">
<div class="r" style="left:0px;top:0px;width:556px;height:40px;background:#2f65ca;"></div>
<svg class="r" style="left:10px;top:12.5px;" width="20" height="12" viewBox="0 0 20 12"><polyline points="1.5,1.5 10,10 18.5,1.5" fill="none" stroke="#b0b6be" stroke-width="2.4"/></svg>
<svg class="r" style="left:46.80000000000001px;top:7px;" width="26" height="26" viewBox="0 0 26 26"><circle cx="13" cy="13" r="13" fill="#a95a7a"/><rect x="11" y="5.2" width="4" height="8.2" fill="#2f65ca"/><rect x="11" y="16.8" width="4" height="4" fill="#2f65ca"/></svg>
<span class="t " style="left:82.12px;top:7.00px;font-size:26px;color:#ffffff;letter-spacing:1.100px;">&lt;default package&gt;</span>
<span class="t " style="left:496.99px;top:7.00px;font-size:24px;color:#ffffff;letter-spacing:-0.542px;">3 ms</span>
<svg class="r" style="left:45px;top:52.5px;" width="20" height="12" viewBox="0 0 20 12"><polyline points="1.5,1.5 10,10 18.5,1.5" fill="none" stroke="#adb0b2" stroke-width="2.4"/></svg>
<svg class="r" style="left:83px;top:47px;" width="26" height="26" viewBox="0 0 26 26"><circle cx="13" cy="13" r="13" fill="#b05051"/><rect x="11" y="5.2" width="4" height="8.2" fill="#3c3f41"/><rect x="11" y="16.8" width="4" height="4" fill="#3c3f41"/></svg>
<span class="t " style="left:116.77px;top:47.00px;font-size:26px;color:#bbbbbb;letter-spacing:0.867px;">HashMapAutocompleterTest</span>
<span class="t " style="left:496.99px;top:47.00px;font-size:24px;color:#7d7d7d;letter-spacing:-0.542px;">3 ms</span>
<svg class="r" style="left:84px;top:90px;" width="12" height="20" viewBox="0 0 12 20"><polyline points="1.5,1.5 10,10 1.5,18.5" fill="none" stroke="#adb0b2" stroke-width="2.4"/></svg>
<svg class="r" style="left:118.80000000000001px;top:87px;" width="26" height="26" viewBox="0 0 26 26"><circle cx="13" cy="13" r="13" fill="#b05051"/><rect x="11" y="5.2" width="4" height="8.2" fill="#3c3f41"/><rect x="11" y="16.8" width="4" height="4" fill="#3c3f41"/></svg>
<span class="t " style="left:155.32px;top:87.00px;font-size:26px;color:#bbbbbb;letter-spacing:0.929px;">Tests complete(String val)</span>
<span class="t " style="left:496.99px;top:87.00px;font-size:24px;color:#7d7d7d;letter-spacing:-0.542px;">3 ms</span>
<svg class="r" style="left:118.80000000000001px;top:127px;" width="26" height="26" viewBox="0 0 26 26"><circle cx="13" cy="13" r="13" fill="#b05051"/><rect x="11" y="5.2" width="4" height="8.2" fill="#3c3f41"/><rect x="11" y="16.8" width="4" height="4" fill="#3c3f41"/></svg>
<span class="t " style="left:154.27px;top:127.00px;font-size:26px;color:#bbbbbb;letter-spacing:0.938px;">Does not use or import disallowed classes</span>
</div>
<div class="r" style="left:656px;top:872px;width:2px;height:844px;background:#323436;"></div>
<div class="c" style="left:658px;top:872px;width:2164px;height:844px;background:#2b2b2b">
<div class="code" style="left:25.8px;top:2px;font-size:28px;letter-spacing:-1.203px"><span style="position:relative;top:2.500px"><span style="color:#8f8f8f;background:#3b3b3b;padding:9px 0 4.300px 0">/Library/Java/JavaVirtualMachines/jdk-17.0.1.jdk/Contents/Home/bin/java ...</span></span></div>
<svg class="r" style="left:5px;top:104.6px;" width="18" height="18" viewBox="0 0 18 18"><rect x="1" y="1" width="16" height="16" fill="none" stroke="#595959" stroke-width="2"/><path d="M4 9H14M9 4V14" stroke="#5e5e5e" stroke-width="2"/></svg>
<div class="code" style="left:25.8px;top:90px;font-size:28px;letter-spacing:-1.203px"><span style="position:relative;top:2.500px"><span style="color:#ff6b68">java.lang.</span><span style="color:#898989;text-decoration:underline;text-decoration-thickness:1.400px;text-underline-offset:2.500px">ExceptionInInitializerError</span><span style="color:#8f8f8f;background:#3b3b3b;padding:9px 0 4.300px 0"> &lt;3 internal lines&gt;</span></span></div>
<svg class="r" style="left:5px;top:148.6px;" width="18" height="18" viewBox="0 0 18 18"><rect x="1" y="1" width="16" height="16" fill="none" stroke="#595959" stroke-width="2"/><path d="M4 9H14M9 4V14" stroke="#5e5e5e" stroke-width="2"/></svg>
<div class="code" style="left:25.8px;top:134px;font-size:28px;letter-spacing:-1.203px"><span style="position:relative;top:2.500px"><span style="color:#ff6b68">    at java.base/java.lang.reflect.Constructor.newInstanceWithCaller(</span><span style="color:#898989;text-decoration:underline;text-decoration-thickness:1.400px;text-underline-offset:2.500px">Constructor.java:499</span><span style="color:#ff6b68">)</span><span style="color:#8f8f8f;background:#3b3b3b;padding:9px 0 4.300px 0"> &lt;17 internal lines&gt;</span></span></div>
<svg class="r" style="left:5px;top:192.6px;" width="18" height="18" viewBox="0 0 18 18"><rect x="1" y="1" width="16" height="16" fill="none" stroke="#595959" stroke-width="2"/><path d="M4 9H14M9 4V14" stroke="#5e5e5e" stroke-width="2"/></svg>
<div class="code" style="left:25.8px;top:178px;font-size:28px;letter-spacing:-1.203px"><span style="position:relative;top:2.500px"><span style="color:#ff6b68">    at java.base/java.util.Optional.orElseGet(</span><span style="color:#898989;text-decoration:underline;text-decoration-thickness:1.400px;text-underline-offset:2.500px">Optional.java:364</span><span style="color:#ff6b68">)</span><span style="color:#8f8f8f;background:#3b3b3b;padding:9px 0 4.300px 0"> &lt;14 internal lines&gt;</span></span></div>
<svg class="r" style="left:5px;top:236.6px;" width="18" height="18" viewBox="0 0 18 18"><rect x="1" y="1" width="16" height="16" fill="none" stroke="#595959" stroke-width="2"/><path d="M4 9H14M9 4V14" stroke="#5e5e5e" stroke-width="2"/></svg>
<div class="code" style="left:25.8px;top:222px;font-size:28px;letter-spacing:-1.203px"><span style="position:relative;top:2.500px"><span style="color:#ff6b68">    at java.base/java.util.stream.ForEachOps$ForEachOp$OfRef.accept(</span><span style="color:#898989;text-decoration:underline;text-decoration-thickness:1.400px;text-underline-offset:2.500px">ForEachOps.java:183</span><span style="color:#ff6b68">)</span><span style="color:#8f8f8f;background:#3b3b3b;padding:9px 0 4.300px 0"> &lt;3 internal lines&gt;</span></span></div>
<svg class="r" style="left:5px;top:280.6px;" width="18" height="18" viewBox="0 0 18 18"><rect x="1" y="1" width="16" height="16" fill="none" stroke="#595959" stroke-width="2"/><path d="M4 9H14M9 4V14" stroke="#5e5e5e" stroke-width="2"/></svg>
<div class="code" style="left:25.8px;top:266px;font-size:28px;letter-spacing:-1.203px"><span style="position:relative;top:2.500px"><span style="color:#ff6b68">    at java.base/java.util.stream.ForEachOps$ForEachOp$OfRef.accept(</span><span style="color:#898989;text-decoration:underline;text-decoration-thickness:1.400px;text-underline-offset:2.500px">ForEachOps.java:183</span><span style="color:#ff6b68">)</span><span style="color:#8f8f8f;background:#3b3b3b;padding:9px 0 4.300px 0"> &lt;4 internal lines&gt;</span></span></div>
<svg class="r" style="left:5px;top:324.6px;" width="18" height="18" viewBox="0 0 18 18"><rect x="1" y="1" width="16" height="16" fill="none" stroke="#595959" stroke-width="2"/><path d="M4 9H14M9 4V14" stroke="#5e5e5e" stroke-width="2"/></svg>
<div class="code" style="left:25.8px;top:310px;font-size:28px;letter-spacing:-1.203px"><span style="position:relative;top:2.500px"><span style="color:#ff6b68">    at java.base/java.util.stream.ForEachOps$ForEachOp$OfRef.accept(</span><span style="color:#898989;text-decoration:underline;text-decoration-thickness:1.400px;text-underline-offset:2.500px">ForEachOps.java:183</span><span style="color:#ff6b68">)</span><span style="color:#8f8f8f;background:#3b3b3b;padding:9px 0 4.300px 0"> &lt;5 internal lines&gt;</span></span></div>
<div class="code" style="left:25.8px;top:354px;font-size:28px;letter-spacing:-1.203px"><span style="position:relative;top:2.500px"><span style="color:#ff6b68">    at java.base/java.util.stream.ForEachOps$ForEachOp.evaluateSequential(</span><span style="color:#898989;text-decoration:underline;text-decoration-thickness:1.400px;text-underline-offset:2.500px">ForEachOps.java:150</span><span style="color:#ff6b68">)</span></span></div>
<svg class="r" style="left:5px;top:412.6px;" width="18" height="18" viewBox="0 0 18 18"><rect x="1" y="1" width="16" height="16" fill="none" stroke="#595959" stroke-width="2"/><path d="M4 9H14M9 4V14" stroke="#5e5e5e" stroke-width="2"/></svg>
<div class="code" style="left:25.8px;top:398px;font-size:28px;letter-spacing:-1.203px"><span style="position:relative;top:2.500px"><span style="color:#ff6b68">    at java.base/java.util.stream.ForEachOps$ForEachOp$OfRef.evaluateSequential(</span><span style="color:#898989;text-decoration:underline;text-decoration-thickness:1.400px;text-underline-offset:2.500px">ForEachOps.java:173</span><span style="color:#ff6b68">)</span><span style="color:#8f8f8f;background:#3b3b3b;padding:9px 0 4.300px 0"> &lt;1 internal line&gt;</span></span></div>
<svg class="r" style="left:5px;top:456.6px;" width="18" height="18" viewBox="0 0 18 18"><rect x="1" y="1" width="16" height="16" fill="none" stroke="#595959" stroke-width="2"/><path d="M4 9H14M9 4V14" stroke="#5e5e5e" stroke-width="2"/></svg>
<div class="code" style="left:25.8px;top:442px;font-size:28px;letter-spacing:-1.203px"><span style="position:relative;top:2.500px"><span style="color:#ff6b68">    at java.base/java.util.stream.ReferencePipeline.forEach(</span><span style="color:#898989;text-decoration:underline;text-decoration-thickness:1.400px;text-underline-offset:2.500px">ReferencePipeline.java:596</span><span style="color:#ff6b68">)</span><span style="color:#8f8f8f;background:#3b3b3b;padding:9px 0 4.300px 0"> &lt;4 internal lines&gt;</span></span></div>
<svg class="r" style="left:5px;top:500.6px;" width="18" height="18" viewBox="0 0 18 18"><rect x="1" y="1" width="16" height="16" fill="none" stroke="#595959" stroke-width="2"/><path d="M4 9H14M9 4V14" stroke="#5e5e5e" stroke-width="2"/></svg>
<div class="code" style="left:25.8px;top:486px;font-size:28px;letter-spacing:-1.203px"><span style="position:relative;top:2.500px"><span style="color:#ff6b68">    at java.base/java.util.ArrayList$ArrayListSpliterator.forEachRemaining(</span><span style="color:#898989;text-decoration:underline;text-decoration-thickness:1.400px;text-underline-offset:2.500px">ArrayList.java:1625</span><span style="color:#ff6b68">)</span><span style="color:#8f8f8f;background:#3b3b3b;padding:9px 0 4.300px 0"> &lt;2 internal lines&gt;</span></span></div>
<div class="code" style="left:25.8px;top:530px;font-size:28px;letter-spacing:-1.203px"><span style="position:relative;top:2.500px"><span style="color:#ff6b68">    at java.base/java.util.stream.ForEachOps$ForEachOp.evaluateSequential(</span><span style="color:#898989;text-decoration:underline;text-decoration-thickness:1.400px;text-underline-offset:2.500px">ForEachOps.java:150</span><span style="color:#ff6b68">)</span></span></div>
<svg class="r" style="left:5px;top:588.6px;" width="18" height="18" viewBox="0 0 18 18"><rect x="1" y="1" width="16" height="16" fill="none" stroke="#595959" stroke-width="2"/><path d="M4 9H14M9 4V14" stroke="#5e5e5e" stroke-width="2"/></svg>
<div class="code" style="left:25.8px;top:574px;font-size:28px;letter-spacing:-1.203px"><span style="position:relative;top:2.500px"><span style="color:#ff6b68">    at java.base/java.util.stream.ForEachOps$ForEachOp$OfRef.evaluateSequential(</span><span style="color:#898989;text-decoration:underline;text-decoration-thickness:1.400px;text-underline-offset:2.500px">ForEachOps.java:173</span><span style="color:#ff6b68">)</span><span style="color:#8f8f8f;background:#3b3b3b;padding:9px 0 4.300px 0"> &lt;1 internal line&gt;</span></span></div>
<svg class="r" style="left:5px;top:632.6px;" width="18" height="18" viewBox="0 0 18 18"><rect x="1" y="1" width="16" height="16" fill="none" stroke="#595959" stroke-width="2"/><path d="M4 9H14M9 4V14" stroke="#5e5e5e" stroke-width="2"/></svg>
<div class="code" style="left:25.8px;top:618px;font-size:28px;letter-spacing:-1.203px"><span style="position:relative;top:2.500px"><span style="color:#ff6b68">    at java.base/java.util.stream.ReferencePipeline.forEach(</span><span style="color:#898989;text-decoration:underline;text-decoration-thickness:1.400px;text-underline-offset:2.500px">ReferencePipeline.java:596</span><span style="color:#ff6b68">)</span><span style="color:#8f8f8f;background:#3b3b3b;padding:9px 0 4.300px 0"> &lt;1 internal line&gt;</span></span></div>
<svg class="r" style="left:5px;top:676.6px;" width="18" height="18" viewBox="0 0 18 18"><rect x="1" y="1" width="16" height="16" fill="none" stroke="#595959" stroke-width="2"/><path d="M4 9H14M9 4V14" stroke="#5e5e5e" stroke-width="2"/></svg>
<div class="code" style="left:25.8px;top:662px;font-size:28px;letter-spacing:-1.203px"><span style="position:relative;top:2.500px"><span style="color:#ff6b68">    at java.base/java.util.ArrayList$ArrayListSpliterator.forEachRemaining(</span><span style="color:#898989;text-decoration:underline;text-decoration-thickness:1.400px;text-underline-offset:2.500px">ArrayList.java:1625</span><span style="color:#ff6b68">)</span><span style="color:#8f8f8f;background:#3b3b3b;padding:9px 0 4.300px 0"> &lt;2 internal lines&gt;</span></span></div>
<div class="code" style="left:25.8px;top:706px;font-size:28px;letter-spacing:-1.203px"><span style="position:relative;top:2.500px"><span style="color:#ff6b68">    at java.base/java.util.stream.ForEachOps$ForEachOp.evaluateSequential(</span><span style="color:#898989;text-decoration:underline;text-decoration-thickness:1.400px;text-underline-offset:2.500px">ForEachOps.java:150</span><span style="color:#ff6b68">)</span></span></div>
<svg class="r" style="left:5px;top:764.6px;" width="18" height="18" viewBox="0 0 18 18"><rect x="1" y="1" width="16" height="16" fill="none" stroke="#595959" stroke-width="2"/><path d="M4 9H14M9 4V14" stroke="#5e5e5e" stroke-width="2"/></svg>
<div class="code" style="left:25.8px;top:750px;font-size:28px;letter-spacing:-1.203px"><span style="position:relative;top:2.500px"><span style="color:#ff6b68">    at java.base/java.util.stream.ForEachOps$ForEachOp$OfRef.evaluateSequential(</span><span style="color:#898989;text-decoration:underline;text-decoration-thickness:1.400px;text-underline-offset:2.500px">ForEachOps.java:173</span><span style="color:#ff6b68">)</span><span style="color:#8f8f8f;background:#3b3b3b;padding:9px 0 4.300px 0"> &lt;1 internal line&gt;</span></span></div>
<svg class="r" style="left:5px;top:808.6px;" width="18" height="18" viewBox="0 0 18 18"><rect x="1" y="1" width="16" height="16" fill="none" stroke="#595959" stroke-width="2"/><path d="M4 9H14M9 4V14" stroke="#5e5e5e" stroke-width="2"/></svg>
<div class="code" style="left:25.8px;top:794px;font-size:28px;letter-spacing:-1.203px"><span style="position:relative;top:2.500px"><span style="color:#ff6b68">    at java.base/java.util.stream.ReferencePipeline.forEach(</span><span style="color:#898989;text-decoration:underline;text-decoration-thickness:1.400px;text-underline-offset:2.500px">ReferencePipeline.java:596</span><span style="color:#ff6b68">)</span><span style="color:#8f8f8f;background:#3b3b3b;padding:9px 0 4.300px 0"> &lt;10 internal lines&gt;</span></span></div>
<svg class="r" style="left:5px;top:852.6px;" width="18" height="18" viewBox="0 0 18 18"><rect x="1" y="1" width="16" height="16" fill="none" stroke="#595959" stroke-width="2"/><path d="M4 9H14M9 4V14" stroke="#5e5e5e" stroke-width="2"/></svg>
<div class="code" style="left:25.8px;top:838px;font-size:28px;letter-spacing:-1.203px"><span style="position:relative;top:2.500px"><span style="color:#ff6b68">    at java.base/java.lang.reflect.Method.invoke(</span><span style="color:#898989;text-decoration:underline;text-decoration-thickness:1.400px;text-underline-offset:2.500px">Method.java:568</span><span style="color:#ff6b68">)</span><span style="color:#8f8f8f;background:#3b3b3b;padding:9px 0 4.300px 0"> &lt;6 internal lines&gt;</span></span></div>
</div>
<svg class="r" style="left:55px;top:881px;" width="32" height="30" viewBox="0 0 32 30"><circle cx="19.500" cy="12.500" r="12" fill="#cb5250"/><path d="M17 5.500h3.800v6H17zM17 14h3.800v-1.200" fill="#3c3f41"/><path d="M14.500 16.500c1 2.500 4 3.500 6.500 2.800" fill="none" stroke="#3c3f41" stroke-width="3"/><path d="M0.500 8.500L14.500 18.500L0.500 29z" fill="#499c54" stroke="#3c3f41" stroke-width="1.200"/></svg>
<svg class="r" style="left:57px;top:932px;" width="26" height="32" viewBox="0 0 26 32"><path d="M3.500 10.500A10 10 0 0 1 21 7" fill="none" stroke="#afb1b3" stroke-width="3"/><path d="M22.500 21.500A10 10 0 0 1 5 25" fill="none" stroke="#afb1b3" stroke-width="3"/><path d="M1 1.500L1.500 10.500L9.500 8z" fill="#afb1b3"/><path d="M25 30.500L24.500 21.500L16.500 24z" fill="#afb1b3"/><rect x="1.500" y="13.500" width="5.600" height="5.600" fill="none" stroke="#afb1b3" stroke-width="2"/><rect x="18.800" y="13.500" width="5.600" height="5.600" fill="none" stroke="#afb1b3" stroke-width="2"/></svg>
<svg class="r" style="left:56px;top:985.5px;" width="29" height="29" viewBox="0 0 29 29"><path d="M28 8.500a8.300 8.300 0 0 1-11.200 7.300L4.500 28L1 24.500L13.200 12.200A8.300 8.300 0 0 1 23.500 1.200L18 6.800L19.500 10.500L23 11.500z" fill="#afb1b3"/></svg>
<div class="r" style="left:50px;top:1031.8px;width:40px;height:2px;background:#555555;"></div>
<div class="r" style="left:60px;top:1056px;width:20px;height:20px;background:#5a5a5a;"></div>
<svg class="r" style="left:55.5px;top:1105.5px;" width="29" height="25" viewBox="0 0 29 25"><path d="M9 0H20L22.500 4.500H29V25H0V4.500H6.500z" fill="#5a5a5a"/><circle cx="14.500" cy="14" r="6.500" fill="#3c3f41"/><circle cx="14.500" cy="14" r="3.600" fill="#5a5a5a"/></svg>
<svg class="r" style="left:57.9px;top:1155.7px;" width="29" height="30" viewBox="0 0 29 30"><g fill="#5a5a5a"><path d="M5.300 9.300A7.100 4.800 0 0 1 19.500 9.300z"/><rect x="0" y="9.100" width="24.100" height="3"/><rect x="15.900" y="12" width="5.300" height="2.100"/><path d="M4.300 12H8.300V14.700H12.100V18.300H8.300V20.700H12.100V28.300C8.500 28 5.500 26.800 4.300 25.300z"/><rect x="0" y="15.400" width="12.100" height="2.700"/><rect x="0" y="22" width="6" height="3.300"/><path d="M15.900 16.200H28.300V28.300z"/></g><path d="M6.200 1.200L12 6.800M17.800 1.200L12 6.800" stroke="#5a5a5a" stroke-width="3.200" fill="none"/><path d="M16 28.600L24 20.600" stroke="#5a5a5a" stroke-width="4.300" fill="none"/></svg>
<svg class="r" style="left:55.5px;top:1208px;" width="29" height="28" viewBox="0 0 29 28"><path d="M6.500 7.500V2H26.500V26H6.500V20.500" fill="none" stroke="#5a5a5a" stroke-width="4"/><path d="M0 14H13" stroke="#5a5a5a" stroke-width="4"/><path d="M12 6.500L20 14L12 21.500z" fill="#5a5a5a"/></svg>
<div class="r" style="left:50px;top:1254px;width:40px;height:2px;background:#555555;"></div>
<svg class="r" style="left:57.8px;top:1277.5px;" width="25" height="21" viewBox="0 0 25 21"><rect x="0" y="0" width="13.600" height="9.500" fill="#afb1b3"/><rect x="16" y="0" width="8.400" height="9.500" fill="#afb1b3"/><rect x="0" y="12.300" width="24.400" height="8.200" fill="#afb1b3"/></svg>
<div class="r" style="left:50px;top:1319.6px;width:40px;height:2px;background:#555555;"></div>
<svg class="r" style="left:55.5px;top:1340px;" width="29" height="29" viewBox="0 0 29 29"><path d="M0 28.800L8.500 18.400L5.500 9.200L13 9.600L19 0L28.800 10.200L20.400 16L20.400 23.400L11.400 19.800z" fill="#afb1b3"/></svg>
<div class="r" style="left:2822px;top:872px;width:1.5px;height:844px;background:#323436;"></div>
<svg class="r" style="left:2842px;top:890px;" width="20" height="24" viewBox="0 0 20 24"><path d="M10 1.5V24M1.5 10.5L10 2L18.5 10.5" fill="none" stroke="#afb1b3" stroke-width="3.8"/></svg>
<svg class="r" style="left:2842px;top:942px;transform:rotate(180deg);" width="20" height="24" viewBox="0 0 20 24"><path d="M10 1.5V24M1.5 10.5L10 2L18.5 10.5" fill="none" stroke="#afb1b3" stroke-width="3.8"/></svg>
<svg class="r" style="left:2840px;top:994px;" width="27" height="28" viewBox="0 0 27 28"><rect x="0" y="0" width="24" height="3.200" fill="#afb1b3"/><path d="M0 9.500H20a5.500 5.500 0 0 1 0 11.500H15" fill="none" stroke="#afb1b3" stroke-width="3.200"/><path d="M17 14.500L10 21L17 27.500z" fill="#afb1b3"/><rect x="0" y="19" width="6" height="3.200" fill="#afb1b3"/></svg>
<svg class="r" style="left:2840px;top:1044px;" width="25" height="24" viewBox="0 0 25 24"><rect x="0" y="4" width="8" height="3.200" fill="#afb1b3"/><rect x="0" y="11" width="8" height="3.200" fill="#afb1b3"/><rect x="0" y="20.500" width="25" height="3.400" fill="#afb1b3"/><path d="M17.500 0V12" stroke="#afb1b3" stroke-width="3.200"/><path d="M10.500 9.500H24.500L17.500 17z" fill="#afb1b3"/></svg>
<svg class="r" style="left:2837.5px;top:1097.5px;" width="29" height="26" viewBox="0 0 29 26"><rect x="7" y="0" width="15" height="5.500" fill="#afb1b3"/><path d="M2.500 8H26.500A2.500 2.500 0 0 1 29 10.500V19.500H22V15H7V19.500H0V10.500A2.500 2.500 0 0 1 2.500 8z" fill="#afb1b3"/><rect x="7.500" y="17" width="14" height="8" fill="none" stroke="#afb1b3" stroke-width="2.400"/><rect x="24" y="10.500" width="2.200" height="2.200" fill="#3c3f41"/></svg>
<svg class="r" style="left:2842px;top:1148px;" width="20" height="26" viewBox="0 0 20 26"><rect x="6.500" y="0" width="7" height="2.500" fill="#afb1b3"/><rect x="0" y="2" width="20" height="3.600" fill="#afb1b3"/><path d="M2 8H18V23.500A2.500 2.500 0 0 1 15.500 26H4.500A2.500 2.500 0 0 1 2 23.500z" fill="#afb1b3"/></svg>
<div class="r" style="left:0px;top:1716px;width:2880px;height:2px;background:#323436;"></div>
<div class="r" style="left:0px;top:1718px;width:2880px;height:40px;background:#3c3f41;"></div>
<div class="r" style="left:139.5px;top:1718px;width:110.5px;height:40px;background:#2d2f31;"></div>
<div class="r" style="left:0px;top:1758px;width:2880px;height:1.5px;background:#4a4d4f;"></div>
<svg class="r" style="left:62px;top:1727px;" width="18" height="24" viewBox="0 0 18 24"><circle cx="3.600" cy="3.900" r="3.300" fill="#afb1b3"/><circle cx="3.600" cy="20.400" r="3.300" fill="#afb1b3"/><circle cx="13.500" cy="6.400" r="3.300" fill="#afb1b3"/><path d="M3.600 3.900V20.400" stroke="#afb1b3" stroke-width="3.200"/><path d="M13.500 6.400C13.500 13 3.600 11.500 3.600 17.500" fill="none" stroke="#afb1b3" stroke-width="3.200"/></svg>
<span class="t " style="left:91.97px;top:1728.60px;font-size:22.5px;color:#bbbbbb;letter-spacing:0.023px;">Git</span>
<svg class="r" style="left:163.5px;top:1728.5px;" width="17" height="20" viewBox="0 0 17 20"><path d="M0 0L17 10L0 20z" fill="#c4c6c8"/></svg>
<span class="t " style="left:193.05px;top:1728.60px;font-size:22.5px;color:#ffffff;letter-spacing:-0.084px;">Run</span>
<svg class="r" style="left:274px;top:1730px;" width="21" height="17" viewBox="0 0 21 17"><rect x="0" y="0" width="3.500" height="3.400" fill="#afb1b3"/><rect x="0" y="6.800" width="3.500" height="3.400" fill="#afb1b3"/><rect x="0" y="13.600" width="3.500" height="3.400" fill="#afb1b3"/><rect x="6" y="0" width="14" height="3.400" fill="#afb1b3"/><rect x="6" y="6.800" width="14" height="3.400" fill="#afb1b3"/><rect x="6" y="13.600" width="14" height="3.400" fill="#afb1b3"/></svg>
<span class="t " style="left:305.39px;top:1728.60px;font-size:22.5px;color:#bbbbbb;letter-spacing:-1.338px;">TODO</span>
<svg class="r" style="left:408.9px;top:1727px;" width="21" height="21" viewBox="0 0 26 26"><circle cx="13" cy="13" r="13" fill="#cb5250"/><rect x="11" y="5.2" width="4" height="8.2" fill="#3c3f41"/><rect x="11" y="16.8" width="4" height="4" fill="#3c3f41"/></svg>
<span class="t " style="left:439.75px;top:1728.60px;font-size:22.5px;color:#bbbbbb;letter-spacing:0.075px;">Problems</span>
<svg class="r" style="left:575.5px;top:1726.5px;" width="26.5" height="25" viewBox="0 0 30.200 28.500"><path d="M0 11.900L11 0.300H17.900V2L12.700 6.700L19.100 12.400L20.200 13.300L30.100 23.700L25.500 28.300L15.300 18.800L15 16.800L8.700 10.700L4.300 15.300z" fill="#afb1b3"/></svg>
<span class="t " style="left:609.65px;top:1728.60px;font-size:22.5px;color:#bbbbbb;letter-spacing:0.366px;">Build</span>
<svg class="r" style="left:701.5px;top:1727.5px;" width="23" height="21" viewBox="0 0 23 21"><rect x="0" y="0" width="23" height="21" fill="#afb1b3"/><path d="M3.500 5L9 10L3.500 15" fill="none" stroke="#3c3f41" stroke-width="2.400"/><rect x="10.500" y="13.800" width="8" height="2.400" fill="#3c3f41"/></svg>
<span class="t " style="left:734.89px;top:1728.60px;font-size:22.5px;color:#bbbbbb;letter-spacing:-0.458px;">Terminal</span>
<svg class="r" style="left:2684px;top:1726px;" width="26" height="26" viewBox="0 0 26 26"><path d="M13 0A13 13 0 0 1 26 13V26H13A13 13 0 0 1 13 0z" fill="#499c54"/><path d="M10 9.500L14 6.800H15.300V19.500H12.600V10.300L10 11.800z" fill="#fff"/></svg>
<span class="t " style="left:2718.05px;top:1728.60px;font-size:22.5px;color:#bbbbbb;letter-spacing:-0.066px;">Event Log</span>
<svg class="r" style="left:12px;top:1768.5px;" width="24" height="24" viewBox="0 0 24 24"><rect x="5.500" y="1" width="17.500" height="17.500" fill="none" stroke="#afb1b3" stroke-width="2"/><path d="M1 5.500V23H18.500" fill="none" stroke="#afb1b3" stroke-width="2"/></svg>
<span class="t " style="left:63.59px;top:1769.60px;font-size:22.5px;color:#bbbbbb;letter-spacing:0.039px;">Tests failed: 5, passed: 0 (4 minutes ago)</span>
<span class="t " style="left:2368.57px;top:1769.60px;font-size:22.5px;color:#bbbbbb;letter-spacing:0.704px;">28:23</span>
<span class="t " style="left:2452.05px;top:1769.60px;font-size:22.5px;color:#bbbbbb;letter-spacing:-1.711px;">LF</span>
<span class="t " style="left:2500.06px;top:1769.60px;font-size:22.5px;color:#bbbbbb;letter-spacing:0.543px;">UTF-8</span>
<span class="t " style="left:2591.08px;top:1769.60px;font-size:22.5px;color:#bbbbbb;letter-spacing:0.053px;">4 spaces</span>
<svg class="r" style="left:2709.5px;top:1766px;" width="21" height="28" viewBox="0 0 18 24"><circle cx="3.600" cy="3.900" r="3.300" fill="#afb1b3"/><circle cx="3.600" cy="20.400" r="3.300" fill="#afb1b3"/><circle cx="13.500" cy="6.400" r="3.300" fill="#afb1b3"/><path d="M3.600 3.900V20.400" stroke="#afb1b3" stroke-width="3.200"/><path d="M13.500 6.400C13.500 13 3.600 11.500 3.600 17.500" fill="none" stroke="#afb1b3" stroke-width="3.200"/></svg>
<span class="t " style="left:2739.91px;top:1769.60px;font-size:22.5px;color:#bbbbbb;letter-spacing:0.141px;">master</span>
<svg class="r" style="left:2829.5px;top:1768px;" width="23" height="22" viewBox="0 0 23 22"><rect x="7.500" y="9.500" width="15.500" height="12.500" fill="#afb1b3"/><path d="M2 12V6.500A4.500 4.500 0 0 1 11 6.500V10" fill="none" stroke="#afb1b3" stroke-width="2.600"/></svg>
</div>
</body></html>
